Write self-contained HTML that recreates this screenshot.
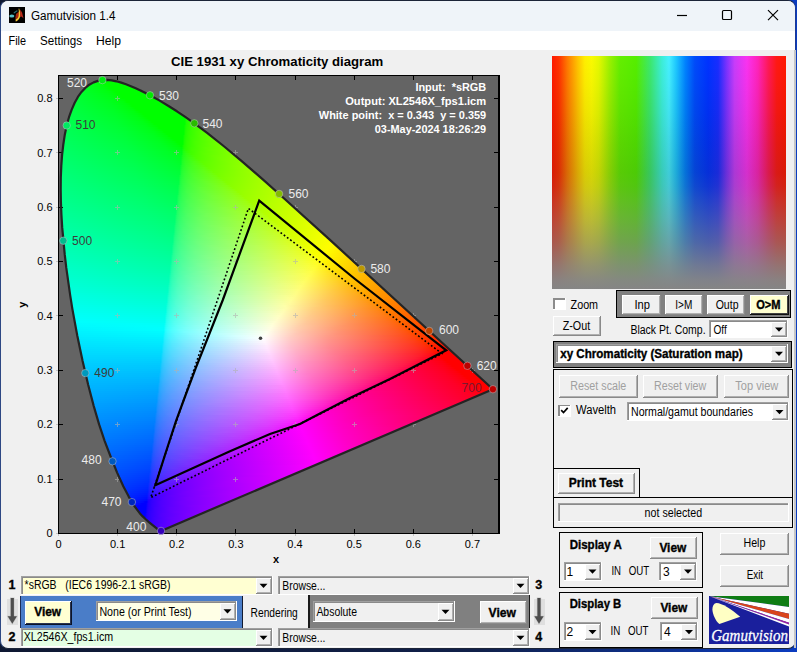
<!DOCTYPE html>
<html><head><meta charset="utf-8"><title>Gamutvision 1.4</title>
<style>
html,body{margin:0;padding:0;background:#0e1832;overflow:hidden;width:797px;height:652px}
#win{position:absolute;left:0;top:0;width:797px;height:652px;overflow:hidden;font-family:"Liberation Sans", Arial, sans-serif;background:linear-gradient(90deg,#0e1832 0,#10204a 60%,#0b3cc0 100%)}
#plotbg{position:absolute;left:58px;top:75px;width:442px;height:459px;background:#646464}
#fill{position:absolute;left:0;top:0;width:797px;height:652px;clip-path:polygon(161.0px 530.9px,159.9px 530.8px,158.2px 529.6px,149.2px 522.3px,145.4px 519.0px,142.7px 516.4px,139.7px 513.2px,134.8px 506.6px,131.9px 502.1px,128.7px 496.6px,123.3px 486.3px,117.1px 472.6px,110.0px 455.0px,104.6px 440.8px,99.1px 424.4px,93.6px 405.6px,88.1px 384.5px,82.6px 361.1px,77.3px 335.8px,72.4px 309.1px,70.2px 295.4px,66.3px 267.9px,64.7px 254.2px,62.2px 227.4px,61.4px 214.4px,60.9px 201.7px,60.7px 189.4px,60.8px 177.4px,61.3px 165.9px,62.1px 154.9px,63.3px 144.5px,64.8px 134.7px,66.7px 125.5px,69.0px 117.2px,71.7px 109.6px,74.7px 102.8px,77.9px 96.9px,81.5px 91.9px,85.3px 87.9px,89.3px 84.7px,93.6px 82.4px,97.9px 80.9px,102.4px 80.1px,107.0px 79.9px,111.7px 80.3px,116.4px 81.3px,121.2px 82.6px,126.0px 84.2px,135.7px 88.2px,140.5px 90.4px,150.0px 95.3px,159.2px 100.4px,168.1px 105.7px,176.9px 111.3px,185.6px 117.2px,194.3px 123.3px,207.1px 132.9px,224.2px 146.5px,241.1px 160.6px,262.2px 178.9px,283.3px 197.7px,329.4px 239.4px,492.9px 389.2px)}
#fill i{position:absolute;display:block;height:2px}
#sq{position:absolute;left:552px;top:56px;width:234px;height:233px}
#sq i{position:absolute;display:block;left:0;width:234px;height:233px}
svg{position:absolute;left:0;top:0}
text{font-family:"Liberation Sans", Arial, sans-serif;white-space:pre}
</style></head><body>
<div id="win">
<div style="position:absolute;left:0;top:0;width:796px;height:649px;box-sizing:border-box;border:1px solid #1b2438;border-left-color:#2e4884;border-right-color:#1c3a94;border-radius:8px;background:#f0f0f0;overflow:hidden">
<div style="height:30px;background:#eff4f9"></div><div style="height:19px;background:#fff"></div></div>
<div id="plotbg"></div>
<div id="fill"><i style="top:79px;left:103px;width:6px;background:linear-gradient(90deg,#00ff00 0,#00ff00 6px)"></i><i style="top:81px;left:93px;width:28px;background:linear-gradient(90deg,#00ff15 0,#00ff06 8px,#00ff00 11px,#00ff00 28px)"></i><i style="top:83px;left:89px;width:38px;background:linear-gradient(90deg,#00ff1c 0,#00ff08 14px,#00ff00 16px,#00ff00 38px)"></i><i style="top:85px;left:86px;width:46px;background:linear-gradient(90deg,#00ff21 0,#00ff0d 17px,#00ff00 23px,#00ff00 46px)"></i><i style="top:87px;left:84px;width:53px;background:linear-gradient(90deg,#00ff26 0,#00ff0e 21px,#00ff00 27px,#00ff00 53px)"></i><i style="top:89px;left:82px;width:59px;background:linear-gradient(90deg,#00ff29 0,#00ff12 23px,#00ff06 29px,#00ff00 31px,#00ff00 59px)"></i><i style="top:91px;left:80px;width:65px;background:linear-gradient(90deg,#00ff2d 0,#00ff10 29px,#00ff00 36px,#00ff00 65px)"></i><i style="top:93px;left:79px;width:70px;background:linear-gradient(90deg,#00ff30 0,#00ff15 29px,#00ff06 37px,#00ff00 38px,#00ff00 70px)"></i><i style="top:95px;left:77px;width:76px;background:linear-gradient(90deg,#00ff33 0,#00ff17 32px,#00ff07 41px,#00ff00 44px,#00ff00 76px)"></i><i style="top:97px;left:76px;width:80px;background:linear-gradient(90deg,#00ff35 0,#00ff19 34px,#00ff08 44px,#00ff00 46px,#00ff00 80px)"></i><i style="top:99px;left:75px;width:85px;background:linear-gradient(90deg,#00ff38 0,#00ff1b 36px,#00ff07 48px,#00ff00 51px,#00ff00 85px)"></i><i style="top:101px;left:74px;width:89px;background:linear-gradient(90deg,#00ff3a 0,#00ff1f 35px,#00ff0b 50px,#00ff00 53px,#00ff00 89px)"></i><i style="top:103px;left:73px;width:94px;background:linear-gradient(90deg,#00ff3c 0,#00ff21 37px,#00ff0c 53px,#00ff00 58px,#00ff00 94px)"></i><i style="top:105px;left:72px;width:98px;background:linear-gradient(90deg,#00ff3f 0,#00ff1e 44px,#00ff0b 57px,#00ff00 60px,#00ff00 98px)"></i><i style="top:107px;left:71px;width:102px;background:linear-gradient(90deg,#00ff41 0,#00ff23 42px,#00ff0c 60px,#00ff00 64px,#00ff00 102px)"></i><i style="top:109px;left:70px;width:106px;background:linear-gradient(90deg,#00ff43 0,#00ff25 44px,#00ff0d 63px,#00ff00 67px,#00ff00 106px)"></i><i style="top:111px;left:69px;width:110px;background:linear-gradient(90deg,#00ff45 0,#00ff28 44px,#00ff10 65px,#00ff00 71px,#00ff00 110px)"></i><i style="top:113px;left:69px;width:113px;background:linear-gradient(90deg,#00ff47 0,#00ff27 48px,#00ff0f 68px,#00ff00 74px,#00ff00 113px)"></i><i style="top:115px;left:68px;width:117px;background:linear-gradient(90deg,#00ff49 0,#00ff2a 48px,#00ff13 69px,#00ff06 75px,#00ff00 77px,#00ff00 117px)"></i><i style="top:117px;left:67px;width:121px;background:linear-gradient(90deg,#00ff4b 0,#00ff2d 48px,#00ff14 72px,#00ff04 79px,#00ff00 81px,#00ff00 118px,#12ff00 119px,#25ff00 121px)"></i><i style="top:119px;left:67px;width:124px;background:linear-gradient(90deg,#00ff4d 0,#00ff2c 52px,#00ff13 75px,#00ff06 81px,#00ff00 82px,#00ff00 118px,#16ff00 119px,#27ff00 121px,#34ff00 124px)"></i><i style="top:121px;left:66px;width:128px;background:linear-gradient(90deg,#00ff4f 0,#00ff2f 52px,#00ff17 76px,#00ff08 84px,#00ff00 86px,#00ff00 119px,#18ff00 120px,#28ff00 122px,#3eff00 128px)"></i><i style="top:123px;left:66px;width:131px;background:linear-gradient(90deg,#00ff50 0,#00ff32 51px,#00ff15 80px,#00ff06 87px,#00ff00 88px,#00ff00 119px,#1bff00 120px,#32ff00 124px,#47ff00 131px)"></i><i style="top:125px;left:65px;width:134px;background:linear-gradient(90deg,#00ff52 0,#00ff34 52px,#00ff1a 80px,#00ff07 90px,#00ff00 93px,#00ff00 119px,#1dff00 121px,#33ff00 125px,#4cff00 134px)"></i><i style="top:127px;left:65px;width:137px;background:linear-gradient(90deg,#00ff54 0,#00ff32 58px,#00ff18 84px,#00ff09 92px,#00ff00 94px,#00ff00 119px,#13ff00 120px,#26ff00 122px,#3eff00 128px,#52ff00 137px)"></i><i style="top:129px;left:64px;width:141px;background:linear-gradient(90deg,#00ff56 0,#00ff36 56px,#00ff1a 86px,#00ff07 96px,#00ff00 99px,#00ff00 120px,#16ff00 121px,#27ff00 123px,#3eff00 129px,#58ff00 141px)"></i><i style="top:131px;left:64px;width:143px;background:linear-gradient(90deg,#00ff58 0,#00ff34 62px,#00ff18 90px,#00ff09 98px,#00ff00 100px,#00ff00 120px,#19ff00 121px,#2eff00 124px,#49ff00 133px,#5cff00 143px)"></i><i style="top:133px;left:63px;width:147px;background:linear-gradient(90deg,#00ff59 0,#00ff39 59px,#00ff1d 90px,#00ff0a 101px,#00ff00 104px,#00ff00 121px,#1bff00 122px,#2fff00 125px,#4cff00 135px,#61ff00 147px)"></i><i style="top:135px;left:63px;width:149px;background:linear-gradient(90deg,#00ff5b 0,#00ff3a 60px,#00ff1f 91px,#00ff09 104px,#00ff00 106px,#00ff00 120px,#1dff00 122px,#34ff00 126px,#51ff00 137px,#64ff00 149px)"></i><i style="top:137px;left:63px;width:152px;background:linear-gradient(90deg,#00ff5d 0,#00ff3a 63px,#00ff1c 96px,#00ff07 107px,#00ff00 109px,#00ff00 120px,#13ff00 121px,#26ff00 123px,#3bff00 128px,#57ff00 140px,#69ff00 152px)"></i><i style="top:139px;left:62px;width:156px;background:linear-gradient(90deg,#00ff5e 0,#00ff3e 61px,#00ff1f 97px,#00ff0b 109px,#00ff00 112px,#00ff00 121px,#16ff00 122px,#28ff00 124px,#42ff00 131px,#5eff00 145px,#6dff00 156px)"></i><i style="top:141px;left:62px;width:158px;background:linear-gradient(90deg,#00ff60 0,#00ff3e 64px,#00ff21 98px,#00ff0a 112px,#00ff00 115px,#00ff00 121px,#19ff00 122px,#2eff00 125px,#48ff00 133px,#6aff00 153px,#71ff00 158px)"></i><i style="top:143px;left:62px;width:161px;background:linear-gradient(90deg,#00ff61 0,#00ff42 61px,#00ff23 99px,#00ff0b 114px,#00ff00 117px,#00ff00 121px,#1bff00 122px,#2fff00 125px,#48ff00 133px,#65ff00 149px,#75ff00 161px)"></i><i style="top:145px;left:62px;width:163px;background:linear-gradient(90deg,#00ff63 0,#00ff40 67px,#00ff21 103px,#00ff0a 117px,#00ff00 119px,#00ff00 120px,#1eff00 122px,#34ff00 126px,#4fff00 136px,#6fff00 156px,#78ff00 163px)"></i><i style="top:147px;left:61px;width:166px;background:linear-gradient(90deg,#00ff65 0,#00ff42 68px,#00ff23 105px,#00ff0e 119px,#00ff08 121px,#13ff04 122px,#27ff00 124px,#3fff00 130px,#5dff00 144px,#7aff00 166px)"></i><i style="top:149px;left:61px;width:169px;background:linear-gradient(90deg,#00ff66 0,#00ff46 65px,#00ff26 105px,#00ff0f 121px,#17ff0c 122px,#28ff06 124px,#2dff00 125px,#43ff00 131px,#64ff00 148px,#7eff00 169px)"></i><i style="top:151px;left:61px;width:171px;background:linear-gradient(90deg,#00ff68 0,#00ff44 71px,#00ff27 107px,#00ff14 121px,#19ff12 122px,#29ff0d 124px,#3aff00 128px,#57ff00 140px,#7aff00 165px,#81ff00 171px)"></i><i style="top:153px;left:61px;width:174px;background:linear-gradient(90deg,#00ff69 0,#00ff45 73px,#00ff24 112px,#00ff18 121px,#1cff16 122px,#30ff11 125px,#3eff06 129px,#41ff00 130px,#5dff00 143px,#85ff00 174px)"></i><i style="top:155px;left:61px;width:176px;background:linear-gradient(90deg,#00ff6b 0,#00ff46 74px,#00ff25 114px,#00ff1d 120px,#1eff1a 122px,#35ff14 126px,#4cff00 134px,#6bff00 152px,#87ff00 176px)"></i><i style="top:157px;left:60px;width:179px;background:linear-gradient(90deg,#00ff6d 0,#00ff46 78px,#00ff28 115px,#00ff21 121px,#14ff1f 122px,#27ff1d 124px,#3dff15 129px,#4dff06 135px,#4fff00 136px,#72ff00 158px,#8aff00 179px)"></i><i style="top:159px;left:60px;width:182px;background:linear-gradient(90deg,#00ff6e 0,#00ff4d 70px,#00ff2e 111px,#00ff24 121px,#17ff23 122px,#29ff20 124px,#41ff17 130px,#51ff07 137px,#55ff00 139px,#79ff00 163px,#8dff00 182px)"></i><i style="top:161px;left:60px;width:184px;background:linear-gradient(90deg,#00ff70 0,#00ff4d 73px,#00ff2e 114px,#00ff27 121px,#1aff26 122px,#2fff22 125px,#4cff15 134px,#58ff05 140px,#5cff00 142px,#81ff00 170px,#90ff00 184px)"></i><i style="top:163px;left:60px;width:186px;background:linear-gradient(90deg,#00ff71 0,#00ff4f 73px,#00ff2e 117px,#00ff2a 121px,#1cff29 122px,#30ff25 125px,#4aff1b 133px,#5cff07 142px,#60ff00 144px,#88ff00 176px,#92ff00 186px)"></i><i style="top:165px;left:60px;width:189px;background:linear-gradient(90deg,#00ff73 0,#00ff4f 76px,#00ff2e 120px,#1eff2c 122px,#35ff27 126px,#4fff1c 135px,#60ff09 144px,#63ff00 146px,#88ff00 175px,#96ff00 189px)"></i><i style="top:167px;left:60px;width:191px;background:linear-gradient(90deg,#00ff74 0,#00ff53 73px,#00ff32 118px,#00ff30 120px,#14ff2f 121px,#28ff2d 123px,#41ff27 129px,#61ff10 144px,#68ff00 149px,#90ff00 182px,#98ff00 191px)"></i><i style="top:169px;left:60px;width:193px;background:linear-gradient(90deg,#00ff76 0,#00ff54 74px,#00ff33 120px,#17ff32 121px,#29ff30 123px,#41ff2a 129px,#60ff17 143px,#6aff05 150px,#6dff00 152px,#96ff00 188px,#9bff00 193px)"></i><i style="top:171px;left:60px;width:196px;background:linear-gradient(90deg,#00ff77 0,#00ff56 74px,#00ff36 120px,#1aff35 121px,#2aff33 123px,#42ff2d 129px,#62ff19 144px,#6eff07 152px,#6fff00 153px,#9aff00 191px,#9eff00 196px)"></i><i style="top:173px;left:59px;width:199px;background:linear-gradient(90deg,#00ff79 0,#00ff57 77px,#00ff38 121px,#1dff37 122px,#31ff35 125px,#4bff2d 133px,#6cff13 151px,#73ff04 156px,#75ff00 158px,#a1ff00 199px)"></i><i style="top:175px;left:59px;width:201px;background:linear-gradient(90deg,#00ff7b 0,#00ff58 78px,#00ff3b 120px,#1fff3a 122px,#36ff36 126px,#50ff2d 135px,#6fff14 153px,#76ff07 158px,#77ff00 159px,#a3ff00 201px)"></i><i style="top:177px;left:59px;width:204px;background:linear-gradient(90deg,#00ff7c 0,#00ff5b 76px,#00ff3e 120px,#14ff3d 121px,#21ff3c 122px,#37ff39 126px,#53ff2f 136px,#72ff15 155px,#7aff04 161px,#7dff00 163px,#a6ff00 204px)"></i><i style="top:179px;left:59px;width:206px;background:linear-gradient(90deg,#00ff7e 0,#00ff59 83px,#00ff40 120px,#18ff3f 121px,#2aff3e 123px,#42ff39 129px,#61ff2a 143px,#78ff12 159px,#7dff06 163px,#7eff00 164px,#a9ff00 206px)"></i><i style="top:181px;left:59px;width:208px;background:linear-gradient(90deg,#00ff7f 0,#00ff5c 81px,#00ff43 120px,#1aff42 121px,#2bff40 123px,#46ff3a 130px,#68ff29 147px,#7eff0f 163px,#82ff00 167px,#abff00 208px)"></i><i style="top:183px;left:59px;width:210px;background:linear-gradient(90deg,#00ff81 0,#00ff5e 81px,#01ff45 120px,#1dff44 121px,#31ff42 124px,#4cff3b 132px,#6dff29 150px,#81ff10 165px,#85ff00 169px,#aeff00 210px)"></i><i style="top:185px;left:59px;width:213px;background:linear-gradient(90deg,#00ff82 0,#00ff61 79px,#00ff48 119px,#1fff47 121px,#37ff43 125px,#53ff3b 135px,#76ff24 156px,#85ff0f 168px,#89ff00 172px,#b1ff00 213px)"></i><i style="top:187px;left:59px;width:215px;background:linear-gradient(90deg,#00ff84 0,#00ff60 85px,#00ff4a 119px,#14ff4a 120px,#29ff48 122px,#42ff43 128px,#60ff38 141px,#81ff1c 164px,#8aff0a 172px,#8cff00 174px,#b3ff00 215px)"></i><i style="top:189px;left:59px;width:217px;background:linear-gradient(90deg,#00ff85 0,#00ff63 83px,#00ff4d 119px,#18ff4c 120px,#2aff4a 122px,#43ff46 128px,#62ff3a 142px,#84ff1d 166px,#8dff0c 174px,#90ff00 177px,#b6ff00 217px)"></i><i style="top:191px;left:59px;width:219px;background:linear-gradient(90deg,#00ff87 0,#00ff65 82px,#00ff4f 119px,#1bff4e 120px,#2bff4d 122px,#44ff48 128px,#68ff3a 145px,#89ff1b 170px,#91ff0a 177px,#93ff00 179px,#b8ff00 219px)"></i><i style="top:193px;left:59px;width:222px;background:linear-gradient(90deg,#00ff88 0,#00ff68 80px,#00ff52 118px,#04ff51 119px,#1dff50 120px,#32ff4e 123px,#4fff48 132px,#70ff38 150px,#8dff1a 173px,#94ff08 180px,#95ff00 181px,#bbff00 222px)"></i><i style="top:195px;left:59px;width:224px;background:linear-gradient(90deg,#00ff8a 0,#00ff67 86px,#00ff54 118px,#20ff53 120px,#37ff50 124px,#52ff49 133px,#75ff38 153px,#90ff1b 175px,#97ff0a 182px,#99ff00 184px,#beff00 224px)"></i><i style="top:197px;left:59px;width:226px;background:linear-gradient(90deg,#00ff8b 0,#00ff6b 82px,#00ff56 118px,#15ff55 119px,#22ff55 120px,#38ff52 124px,#55ff4b 134px,#78ff38 155px,#91ff1e 176px,#9aff0b 184px,#9cff00 186px,#c0ff00 226px)"></i><i style="top:199px;left:59px;width:228px;background:linear-gradient(90deg,#00ff8d 0,#00ff6b 86px,#00ff58 118px,#18ff58 119px,#2bff56 121px,#47ff52 128px,#67ff46 143px,#90ff25 174px,#9cff0d 186px,#9fff00 189px,#c3ff00 228px)"></i><i style="top:201px;left:59px;width:231px;background:linear-gradient(90deg,#00ff8e 0,#00ff6f 81px,#00ff5a 118px,#1bff5a 119px,#2cff59 121px,#48ff54 128px,#6eff45 147px,#93ff26 176px,#9fff0f 188px,#a2ff00 191px,#c6ff00 231px)"></i><i style="top:203px;left:59px;width:233px;background:linear-gradient(90deg,#00ff90 0,#00ff6f 85px,#00ff5d 117px,#05ff5d 118px,#1eff5c 119px,#33ff5a 122px,#50ff54 131px,#73ff45 150px,#95ff27 178px,#a3ff0d 191px,#a6ff00 194px,#c9ff00 233px)"></i><i style="top:205px;left:60px;width:234px;background:linear-gradient(90deg,#00ff91 0,#00ff72 82px,#00ff5f 116px,#20ff5e 118px,#34ff5c 121px,#51ff56 130px,#72ff49 148px,#98ff28 179px,#a5ff0f 192px,#a8ff00 195px,#cbff00 234px)"></i><i style="top:207px;left:60px;width:236px;background:linear-gradient(90deg,#00ff93 0,#00ff72 86px,#00ff62 116px,#15ff61 117px,#2aff60 119px,#44ff5c 125px,#62ff53 138px,#88ff3d 164px,#a0ff21 186px,#a9ff0d 195px,#acff00 198px,#ceff00 236px)"></i><i style="top:209px;left:60px;width:238px;background:linear-gradient(90deg,#00ff94 0,#00ff75 84px,#00ff64 116px,#19ff63 117px,#2bff62 119px,#45ff5e 125px,#65ff55 139px,#8dff3c 168px,#a6ff1d 191px,#aeff07 199px,#afff00 200px,#d0ff00 238px)"></i><i style="top:211px;left:60px;width:241px;background:linear-gradient(90deg,#00ff96 0,#00ff75 88px,#00ff66 116px,#1cff65 117px,#2dff64 119px,#46ff60 125px,#69ff56 141px,#96ff37 175px,#aaff1a 195px,#b0ff09 201px,#b2ff00 203px,#d4ff00 241px)"></i><i style="top:213px;left:60px;width:243px;background:linear-gradient(90deg,#00ff98 0,#00ff75 92px,#00ff69 115px,#05ff68 116px,#1eff67 117px,#33ff66 120px,#4fff61 128px,#73ff54 147px,#9fff31 183px,#afff17 199px,#b4ff06 204px,#b5ff00 205px,#d6ff00 243px)"></i><i style="top:215px;left:60px;width:245px;background:linear-gradient(90deg,#00ff99 0,#00ff79 88px,#00ff6b 115px,#20ff6a 117px,#34ff68 120px,#4dff64 127px,#71ff58 145px,#a0ff35 183px,#b2ff18 201px,#b6ff09 206px,#b8ff00 208px,#d9ff00 245px)"></i><i style="top:217px;left:60px;width:247px;background:linear-gradient(90deg,#00ff9b 0,#00ff7a 90px,#00ff6d 115px,#15ff6c 116px,#2aff6b 118px,#42ff68 123px,#64ff60 137px,#8bff4b 164px,#abff2b 193px,#b8ff0f 207px,#bbff00 210px,#dcff00 247px)"></i><i style="top:219px;left:60px;width:249px;background:linear-gradient(90deg,#00ff9d 0,#00ff7a 94px,#00ff6f 115px,#19ff6e 116px,#2cff6d 118px,#46ff6a 124px,#6aff60 140px,#94ff47 171px,#adff2c 195px,#baff13 208px,#bdff08 211px,#beff00 212px,#deff00 249px)"></i><i style="top:221px;left:60px;width:252px;background:linear-gradient(90deg,#00ff9e 0,#00ff7e 90px,#00ff71 115px,#1cff71 116px,#33ff6f 119px,#4fff6a 127px,#71ff60 144px,#a0ff41 181px,#b8ff20 205px,#bfff0b 213px,#c1ff00 215px,#e2ff00 252px)"></i><i style="top:223px;left:61px;width:253px;background:linear-gradient(90deg,#00ffa0 0,#00ff7d 95px,#00ff74 113px,#06ff73 114px,#1fff73 115px,#34ff71 118px,#50ff6d 126px,#72ff62 143px,#a4ff41 183px,#bbff21 206px,#c2ff0d 214px,#c4ff00 216px,#e5ff00 253px)"></i><i style="top:225px;left:61px;width:255px;background:linear-gradient(90deg,#00ffa1 0,#00ff81 91px,#00ff76 113px,#21ff75 115px,#3aff73 119px,#58ff6d 129px,#7dff60 150px,#adff3b 191px,#bfff1e 210px,#c6ff0b 217px,#c8ff00 219px,#e8ff00 255px)"></i><i style="top:227px;left:61px;width:257px;background:linear-gradient(90deg,#00ffa3 0,#00ff82 93px,#00ff78 113px,#16ff78 114px,#2bff77 116px,#46ff73 122px,#67ff6b 136px,#90ff58 164px,#b4ff36 198px,#c5ff19 215px,#c9ff08 220px,#caff00 221px,#eaff00 257px)"></i><i style="top:229px;left:61px;width:259px;background:linear-gradient(90deg,#00ffa5 0,#00ff84 93px,#00ff7a 113px,#19ff7a 114px,#2cff79 116px,#47ff76 122px,#68ff6e 136px,#93ff59 166px,#b7ff37 200px,#c8ff18 218px,#ceff00 224px,#edff00 259px)"></i><i style="top:231px;left:61px;width:262px;background:linear-gradient(90deg,#00ffa6 0,#00ff88 89px,#00ff7c 113px,#1cff7c 114px,#2eff7b 116px,#48ff78 122px,#6cff6f 138px,#96ff5a 168px,#bbff37 203px,#cbff19 220px,#d0ff08 225px,#d1ff00 226px,#f1ff00 262px)"></i><i style="top:233px;left:61px;width:264px;background:linear-gradient(90deg,#00ffa8 0,#00ff89 91px,#00ff7f 112px,#07ff7f 113px,#1fff7e 114px,#3aff7c 118px,#5bff76 129px,#7eff6a 149px,#b0ff48 191px,#c7ff29 215px,#d1ff12 225px,#d4ff00 229px,#f4ff00 264px)"></i><i style="top:235px;left:62px;width:265px;background:linear-gradient(90deg,#00ffa9 0,#00ff8c 88px,#00ff81 111px,#21ff80 113px,#36ff7f 116px,#52ff7b 124px,#76ff70 142px,#a5ff56 179px,#c5ff32 211px,#d4ff14 226px,#d7ff00 230px,#f7ff00 265px)"></i><i style="top:237px;left:62px;width:267px;background:linear-gradient(90deg,#00ffab 0,#00ff8b 95px,#00ff84 111px,#16ff83 112px,#24ff83 113px,#3cff81 117px,#5aff7b 127px,#7eff70 147px,#acff53 185px,#c8ff33 213px,#d6ff18 227px,#d9ff0a 231px,#dbff00 233px,#faff00 267px)"></i><i style="top:239px;left:62px;width:270px;background:linear-gradient(90deg,#00ffad 0,#00ff8c 98px,#00ff86 111px,#1aff85 112px,#2dff84 114px,#48ff81 120px,#69ff7a 134px,#93ff68 162px,#bdff47 200px,#d3ff27 223px,#dbff10 232px,#deff00 235px,#feff00 270px)"></i><i style="top:241px;left:62px;width:272px;background:linear-gradient(90deg,#00ffaf 0,#00ff8e 98px,#00ff88 111px,#1dff87 112px,#2fff87 114px,#49ff84 120px,#6cff7c 135px,#97ff69 165px,#c2ff45 205px,#d7ff26 226px,#dfff0e 235px,#e1ff02 237px,#fffd00 271px,#fffc00 272px)"></i><i style="top:243px;left:62px;width:274px;background:linear-gradient(90deg,#00ffb0 0,#00ff93 91px,#00ff8b 110px,#07ff8a 111px,#20ff8a 112px,#36ff88 115px,#52ff84 123px,#72ff7c 138px,#9eff68 170px,#c6ff45 208px,#daff27 228px,#e2ff10 237px,#e5ff00 240px,#fffd00 270px,#fff700 274px)"></i><i style="top:245px;left:62px;width:276px;background:linear-gradient(90deg,#00ffb2 0,#00ff92 99px,#00ff8d 110px,#22ff8c 112px,#3cff8a 116px,#5dff85 127px,#84ff78 149px,#b9ff57 194px,#d6ff35 223px,#e3ff19 237px,#e7ff0a 241px,#e8ff00 242px,#fffd00 268px,#fff200 276px)"></i><i style="top:247px;left:63px;width:277px;background:linear-gradient(90deg,#00ffb4 0,#00ff92 103px,#00ff8f 109px,#17ff8f 110px,#2cff8e 112px,#41ff8c 116px,#62ff86 128px,#8aff79 152px,#beff56 197px,#d9ff36 224px,#e6ff1a 238px,#ebff06 243px,#ecff00 244px,#fffd00 266px,#ffee00 277px)"></i><i style="top:249px;left:63px;width:279px;background:linear-gradient(90deg,#00ffb5 0,#00ff99 91px,#00ff91 109px,#1aff91 110px,#2eff90 112px,#49ff8d 118px,#6bff86 132px,#98ff75 162px,#c9ff50 207px,#e1ff2f 231px,#ebff16 242px,#eeff09 245px,#efff00 246px,#fffe00 264px,#ffe900 279px)"></i><i style="top:251px;left:63px;width:282px;background:linear-gradient(90deg,#00ffb7 0,#00ff9a 94px,#00ff94 109px,#1dff93 110px,#2fff92 112px,#4aff90 118px,#6cff89 132px,#9aff77 163px,#caff53 207px,#e3ff32 232px,#eeff18 244px,#f3ff00 249px,#fffc00 264px,#ffe400 282px)"></i><i style="top:253px;left:63px;width:284px;background:linear-gradient(90deg,#00ffb9 0,#00ff9b 97px,#00ff96 108px,#08ff96 109px,#20ff95 110px,#31ff95 112px,#4bff92 118px,#6cff8b 132px,#93ff7d 157px,#c5ff5c 201px,#e0ff3d 228px,#efff1f 244px,#f4ff0e 249px,#f6ff00 251px,#fffc00 262px,#ffdf00 284px)"></i><i style="top:255px;left:63px;width:286px;background:linear-gradient(90deg,#00ffbb 0,#00ff9c 100px,#00ff99 108px,#23ff98 110px,#3cff96 114px,#57ff92 122px,#7dff89 141px,#aeff72 179px,#d9ff4c 220px,#efff2a 242px,#f7ff11 251px,#faff00 254px,#fffc00 261px,#ffdb00 286px)"></i><i style="top:257px;left:64px;width:287px;background:linear-gradient(90deg,#00ffbc 0,#00ffa1 92px,#00ff9b 107px,#17ff9a 108px,#25ff9a 109px,#3eff98 113px,#5fff93 124px,#84ff89 144px,#b9ff6e 187px,#e1ff47 226px,#f4ff27 245px,#fbff13 252px,#fdff09 254px,#feff00 255px,#ffd700 287px)"></i><i style="top:259px;left:64px;width:289px;background:linear-gradient(90deg,#00ffbe 0,#00ffa1 98px,#00ff9d 107px,#1bff9d 108px,#2fff9c 110px,#4aff99 116px,#6dff93 130px,#9dff82 162px,#d3ff5c 211px,#efff38 239px,#fcff1b 252px,#fffd0c 256px,#fffa00 258px,#ffd200 289px)"></i><i style="top:261px;left:64px;width:292px;background:linear-gradient(90deg,#00ffc0 0,#00ffa4 96px,#00ffa0 107px,#1eff9f 108px,#30ff9e 110px,#4bff9c 116px,#6bff96 129px,#92ff8a 153px,#ccff67 203px,#edff43 235px,#feff23 252px,#fff80e 258px,#fff500 260px,#ffcd00 292px)"></i><i style="top:263px;left:64px;width:294px;background:linear-gradient(90deg,#00ffc2 0,#00ffa5 100px,#00ffa2 106px,#08ffa2 107px,#21ffa1 108px,#37ffa0 111px,#52ff9d 118px,#76ff96 134px,#a6ff84 168px,#dbff5e 216px,#f7ff39 244px,#fffc24 254px,#fff20b 261px,#ffef00 263px,#ffc900 294px)"></i><i style="top:265px;left:65px;width:295px;background:linear-gradient(90deg,#00ffc4 0,#00ffa6 102px,#00ffa5 105px,#23ffa4 107px,#39ffa3 110px,#56ff9f 118px,#7cff97 136px,#aeff83 173px,#deff5f 217px,#f8ff3e 243px,#fffd2f 251px,#ffee12 261px,#ffea00 264px,#ffc500 295px)"></i><i style="top:267px;left:65px;width:297px;background:linear-gradient(90deg,#00ffc6 0,#00ffa8 103px,#00ffa7 105px,#18ffa7 106px,#2effa6 108px,#47ffa4 113px,#68ff9f 125px,#93ff92 151px,#ccff73 199px,#efff51 233px,#fffe38 249px,#ffeb17 262px,#ffe70a 265px,#ffe502 266px,#ffc100 297px)"></i><i style="top:269px;left:65px;width:299px;background:linear-gradient(90deg,#00ffc8 0,#00ffaa 104px,#00ffa9 105px,#1bffa9 106px,#2fffa8 108px,#48ffa6 113px,#68ffa1 125px,#90ff97 148px,#ccff77 198px,#f5ff50 237px,#fffc3d 249px,#ffe515 265px,#ffdf00 269px,#ffbd00 299px)"></i><i style="top:271px;left:65px;width:301px;background:linear-gradient(90deg,#00ffca 0,#00ffac 105px,#1fffab 106px,#37ffaa 109px,#56ffa7 117px,#80ff9f 137px,#b2ff8b 174px,#e4ff68 219px,#fffe47 246px,#ffe21c 265px,#ffdc0a 270px,#ffdb00 271px,#ffb900 301px)"></i><i style="top:273px;left:66px;width:303px;background:linear-gradient(90deg,#00ffcb 0,#00ffb0 100px,#00ffaf 103px,#09ffae 104px,#21ffae 105px,#38ffad 108px,#50ffaa 114px,#70ffa5 127px,#9bff98 154px,#d5ff79 203px,#faff56 238px,#fffc4b 245px,#ffdf20 265px,#ffd70c 271px,#ffd500 273px,#ffb400 303px)"></i><i style="top:275px;left:66px;width:305px;background:linear-gradient(90deg,#00ffcd 0,#00ffb3 98px,#00ffb1 103px,#24ffb0 105px,#3fffaf 109px,#62ffab 120px,#8bffa1 142px,#c2ff89 185px,#efff68 226px,#fffd53 243px,#ffda21 267px,#ffd30e 273px,#ffd000 275px,#ffb000 305px)"></i><i style="top:277px;left:66px;width:307px;background:linear-gradient(90deg,#00ffcf 0,#00ffb5 100px,#00ffb4 103px,#18ffb3 104px,#2fffb2 106px,#4cffb0 112px,#6effab 125px,#9cff9f 153px,#deff7b 209px,#fffd5a 241px,#ffd622 269px,#ffcd0b 276px,#ffcb00 278px,#ffac00 307px)"></i><i style="top:279px;left:67px;width:308px;background:linear-gradient(90deg,#00ffd1 0,#00ffb7 100px,#00ffb6 102px,#1cffb6 103px,#30ffb5 105px,#4dffb3 111px,#70ffad 125px,#9bffa2 151px,#dcff81 205px,#fffd5f 239px,#ffd123 270px,#ffc90d 277px,#ffc600 279px,#ffa800 308px)"></i><i style="top:281px;left:67px;width:310px;background:linear-gradient(90deg,#00ffd3 0,#00ffb9 102px,#1fffb8 103px,#32ffb8 105px,#4effb5 111px,#71ffb0 125px,#9cffa5 151px,#dcff85 204px,#fffe66 237px,#ffcf28 270px,#ffc40f 279px,#ffc100 282px,#ffa400 310px)"></i><i style="top:283px;left:67px;width:313px;background:linear-gradient(90deg,#00ffd5 0,#00ffbb 101px,#09ffbb 102px,#22ffbb 103px,#39ffba 106px,#55ffb7 113px,#7affb1 129px,#adffa2 163px,#e9ff80 215px,#fffd6b 236px,#ffcd2d 270px,#ffc011 281px,#ffbd00 284px,#ff9f00 313px)"></i><i style="top:285px;left:67px;width:315px;background:linear-gradient(90deg,#00ffd7 0,#00ffbe 101px,#24ffbd 103px,#3bffbc 106px,#59ffba 114px,#7dffb4 130px,#afffa4 164px,#e7ff86 212px,#fffe72 234px,#ffcc34 269px,#ffbc12 283px,#ffb700 287px,#ff9b00 315px)"></i><i style="top:287px;left:68px;width:316px;background:linear-gradient(90deg,#00ffd9 0,#00ffc1 100px,#19ffc0 101px,#30ffc0 103px,#4dffbe 109px,#6effb9 121px,#99ffaf 146px,#dbff93 199px,#fffd76 232px,#ffc734 270px,#ffb714 284px,#ffb300 288px,#ff9800 316px)"></i><i style="top:289px;left:68px;width:318px;background:linear-gradient(90deg,#00ffdb 0,#00ffc3 100px,#1cffc3 101px,#31ffc2 103px,#4effc0 109px,#73ffbb 123px,#a1ffb0 151px,#e4ff91 206px,#fffe7d 230px,#ffcb41 265px,#ffb51b 284px,#ffb00a 289px,#ffae00 291px,#ff9400 318px)"></i><i style="top:291px;left:68px;width:320px;background:linear-gradient(90deg,#00ffdd 0,#00ffc6 100px,#20ffc6 101px,#33ffc5 103px,#4fffc3 109px,#6fffbf 121px,#98ffb6 144px,#d9ff9c 195px,#fffd82 229px,#ffc945 265px,#ffb019 287px,#ffab07 292px,#ffaa00 293px,#ff9000 320px)"></i><i style="top:293px;left:68px;width:322px;background:linear-gradient(90deg,#00ffe0 0,#00ffc9 99px,#0affc9 100px,#23ffc8 101px,#3affc7 104px,#53ffc5 110px,#72ffc1 122px,#9cffb8 146px,#e1ff9c 201px,#fffd86 228px,#ffcc4f 261px,#ffae1f 287px,#ffa609 294px,#ffa400 296px,#ff8c00 322px)"></i><i style="top:295px;left:69px;width:324px;background:linear-gradient(90deg,#00ffe2 0,#00ffcc 98px,#25ffcb 100px,#3cffca 103px,#5bffc8 111px,#83ffc2 129px,#b7ffb3 164px,#f7ff94 217px,#fffc8b 226px,#ffcb54 259px,#ffa920 288px,#ffa20b 295px,#ffa000 297px,#ff8800 324px)"></i><i style="top:297px;left:69px;width:326px;background:linear-gradient(90deg,#00ffe4 0,#00ffce 98px,#19ffce 99px,#28ffce 100px,#42ffcd 104px,#5effca 112px,#84ffc5 129px,#b8ffb7 164px,#fbff96 219px,#fffd91 224px,#ffca58 258px,#ffa623 289px,#ff9d09 298px,#ff9c00 299px,#ff8400 326px)"></i><i style="top:299px;left:69px;width:328px;background:linear-gradient(90deg,#00ffe6 0,#00ffd1 98px,#1dffd1 99px,#32ffd0 101px,#50ffce 107px,#75ffca 121px,#a2ffc1 147px,#efffa2 208px,#fffe97 222px,#ffcb60 255px,#ffa325 290px,#ff9a0f 299px,#ff9700 302px,#ff8000 328px)"></i><i style="top:301px;left:70px;width:329px;background:linear-gradient(90deg,#00ffe8 0,#00ffd4 97px,#20ffd4 98px,#34ffd3 100px,#51ffd1 106px,#76ffcd 120px,#a3ffc4 146px,#f4ffa4 210px,#fffd9c 220px,#ffc963 254px,#ff9e24 292px,#ff950d 301px,#ff9300 303px,#ff7c00 329px)"></i><i style="top:303px;left:70px;width:331px;background:linear-gradient(90deg,#00ffea 0,#00ffd7 96px,#0bffd7 97px,#23ffd6 98px,#35ffd6 100px,#52ffd4 106px,#77ffd0 120px,#a7ffc7 148px,#faffa6 213px,#fffb9e 220px,#ffcc6c 250px,#ff9923 295px,#ff900a 304px,#ff8e00 306px,#ff7900 331px)"></i><i style="top:305px;left:70px;width:334px;background:linear-gradient(90deg,#00ffed 0,#00ffda 96px,#26ffd9 98px,#3dffd8 101px,#59ffd7 108px,#80ffd2 124px,#b3ffc7 156px,#feffa9 215px,#ffc265 256px,#ff9727 295px,#ff8d10 305px,#ff8a00 308px,#ff7400 334px)"></i><i style="top:307px;left:71px;width:335px;background:linear-gradient(90deg,#00ffef 0,#00ffdd 95px,#1affdc 96px,#31ffdc 98px,#4cffdb 103px,#70ffd7 115px,#9dffd0 139px,#e9ffb8 196px,#fffdab 215px,#ffce79 244px,#ff962f 292px,#ff8911 306px,#ff8500 310px,#ff7000 335px)"></i><i style="top:309px;left:71px;width:337px;background:linear-gradient(90deg,#00fff1 0,#00ffe0 95px,#1effdf 96px,#33ffdf 98px,#49ffde 102px,#6cffdb 113px,#94ffd5 133px,#d0ffc6 175px,#fffeb1 213px,#ffd080 241px,#ff9c40 284px,#ff8718 306px,#ff8207 311px,#ff8100 312px,#ff6c00 337px)"></i><i style="top:311px;left:71px;width:339px;background:linear-gradient(90deg,#00fff3 0,#00ffe3 95px,#21ffe2 96px,#35ffe2 98px,#52ffe0 104px,#74ffdd 116px,#a2ffd6 141px,#f0ffbe 199px,#fffdb6 212px,#ffcc81 242px,#ff9840 286px,#ff8319 308px,#ff7e09 313px,#ff7d00 315px,#ff6800 339px)"></i><i style="top:313px;left:72px;width:340px;background:linear-gradient(90deg,#00fff6 0,#00ffe6 93px,#0bffe6 94px,#24ffe5 95px,#36ffe5 97px,#50ffe4 102px,#75ffe1 115px,#a3ffda 140px,#efffc4 196px,#fffebc 209px,#ffcb85 240px,#ff9947 282px,#ff801c 308px,#ff7a0b 314px,#ff7900 316px,#ff6400 340px)"></i><i style="top:315px;left:72px;width:342px;background:linear-gradient(90deg,#00fff8 0,#00ffe9 93px,#27ffe8 95px,#3effe8 98px,#58ffe6 104px,#7affe3 117px,#a9ffdc 143px,#ffffc2 207px,#ffcb8b 238px,#ff994d 280px,#ff7d1f 309px,#ff7509 317px,#ff7400 319px,#ff6100 342px)"></i><i style="top:317px;left:73px;width:344px;background:linear-gradient(90deg,#00fffa 0,#00ffec 92px,#1affec 93px,#29ffeb 94px,#40ffeb 97px,#5cffe9 104px,#84ffe6 120px,#bcffdc 154px,#fffec7 205px,#ffcd92 234px,#ff9752 278px,#ff781f 310px,#ff710b 318px,#ff7000 320px,#ff5c00 344px)"></i><i style="top:319px;left:73px;width:346px;background:linear-gradient(90deg,#00fffd 0,#00ffef 92px,#1effef 93px,#2cffef 94px,#46ffee 98px,#63ffec 106px,#89ffe8 122px,#c4ffde 159px,#fffdcb 204px,#ffc993 235px,#ff9554 278px,#ff7522 311px,#ff6d0c 320px,#ff6c01 322px,#ff5800 346px)"></i><i style="top:321px;left:73px;width:348px;background:linear-gradient(90deg,#00ffff 0,#00fff2 92px,#22fff2 93px,#36fff2 95px,#54fff0 101px,#79ffee 114px,#abffe7 141px,#fffed1 202px,#ffc897 234px,#ff955a 276px,#ff6f1f 315px,#ff680a 323px,#ff6700 325px,#ff5400 348px)"></i><i style="top:323px;left:74px;width:349px;background:linear-gradient(90deg,#00fcff 0,#00fffa 66px,#00fff6 90px,#0cfff5 91px,#25fff5 92px,#38fff5 94px,#55fff4 100px,#78fff1 112px,#a9ffeb 138px,#ffffd7 199px,#ffc89c 231px,#ff915b 276px,#ff6d23 314px,#ff640c 324px,#ff6300 326px,#ff5000 349px)"></i><i style="top:325px;left:74px;width:351px;background:linear-gradient(90deg,#00faff 0,#00fffc 73px,#00fff9 90px,#28fff8 92px,#40fff8 95px,#61fff7 103px,#8cfff3 121px,#c7ffea 157px,#ffffdc 198px,#ffcda7 226px,#ff9667 269px,#ff6b27 314px,#ff600d 326px,#ff5e00 329px,#ff4b00 351px)"></i><i style="top:327px;left:74px;width:354px;background:linear-gradient(90deg,#00f7ff 0,#00fffd 87px,#00fffc 90px,#1bfffc 91px,#34fffc 93px,#54fffb 99px,#7afff8 112px,#adfff3 139px,#fffee1 197px,#ffcfae 223px,#ff9d74 261px,#ff6526 317px,#ff5c0f 328px,#ff5900 331px,#ff4600 354px)"></i><i style="top:329px;left:75px;width:355px;background:linear-gradient(90deg,#00f5ff 0,#00ffff 89px,#1fffff 90px,#35ffff 92px,#4cfffe 96px,#69fffd 104px,#96fffa 124px,#d8fff0 166px,#fffde5 195px,#ffccb0 222px,#ff9772 263px,#ff6025 319px,#ff570d 330px,#ff5400 333px,#ff4200 355px)"></i><i style="top:331px;left:75px;width:357px;background:linear-gradient(90deg,#00f2ff 0,#00fbff 89px,#22fbff 90px,#37fcff 92px,#51fcff 97px,#77feff 109px,#a7fffc 133px,#feffed 192px,#ffc5ad 225px,#ff9171 266px,#ff5d27 320px,#ff530e 332px,#ff5000 335px,#ff3d00 357px)"></i><i style="top:333px;left:75px;width:359px;background:linear-gradient(90deg,#00f0ff 0,#00f8ff 88px,#0cf8ff 89px,#25f8ff 90px,#3ff8ff 93px,#5df9ff 100px,#85fbff 115px,#bcfffd 145px,#fffff2 191px,#ffc8b6 221px,#ff9378 262px,#ff5826 323px,#ff4d0c 335px,#ff4b00 338px,#ff3800 359px)"></i><i style="top:335px;left:76px;width:360px;background:linear-gradient(90deg,#00eeff 0,#00f5ff 87px,#28f5ff 89px,#3ff5ff 92px,#61f6ff 100px,#8df8ff 118px,#d4ffff 159px,#fffef7 189px,#ffccbf 216px,#ff9b87 252px,#ff623f 307px,#ff4c18 332px,#ff4706 338px,#ff4600 339px,#ff3300 360px)"></i><i style="top:337px;left:76px;width:363px;background:linear-gradient(90deg,#00ebff 0,#00f1ff 87px,#1bf1ff 88px,#2af2ff 89px,#46f2ff 93px,#67f3ff 102px,#93f5ff 121px,#eefeff 176px,#fffdfc 188px,#ffccc5 214px,#ff9889 252px,#ff512c 323px,#ff440f 338px,#ff4000 342px,#ff2d00 363px)"></i><i style="top:339px;left:77px;width:364px;background:linear-gradient(90deg,#00e9ff 0,#00eeff 86px,#1feeff 87px,#34eeff 89px,#4fefff 94px,#72f0ff 105px,#aaf3ff 133px,#fffafe 187px,#ffc8c5 214px,#ff948a 252px,#ff5032 320px,#ff4013 338px,#ff3c00 343px,#ff2700 364px)"></i><i style="top:341px;left:77px;width:366px;background:linear-gradient(90deg,#00e6ff 0,#00ebff 86px,#22ebff 87px,#36ebff 89px,#54ecff 95px,#79edff 108px,#adefff 135px,#fff5fd 188px,#ffc5c7 214px,#ff938d 251px,#ff5a47 306px,#ff3f1c 336px,#ff3708 344px,#ff3600 346px,#ff2100 366px)"></i><i style="top:343px;left:78px;width:367px;background:linear-gradient(90deg,#00e4ff 0,#00e8ff 84px,#0ce8ff 85px,#24e8ff 86px,#37e8ff 88px,#54e8ff 94px,#79e9ff 107px,#aeebff 135px,#fff0fd 188px,#ffc2c9 213px,#ff8f8e 251px,#ff412a 329px,#ff330d 344px,#ff3000 347px,#ff1a00 367px)"></i><i style="top:345px;left:78px;width:369px;background:linear-gradient(90deg,#00e2ff 0,#00e5ff 84px,#27e5ff 86px,#3ee5ff 89px,#58e5ff 95px,#7de6ff 109px,#afe8ff 136px,#ffeafd 189px,#ffbfcb 213px,#ff8c90 251px,#ff3a27 333px,#ff2e0e 346px,#ff2c08 348px,#ff2a01 349px,#ff1100 369px)"></i><i style="top:347px;left:78px;width:371px;background:linear-gradient(90deg,#00dfff 0,#00e2ff 84px,#1ae2ff 85px,#29e2ff 86px,#44e2ff 90px,#65e2ff 99px,#93e3ff 120px,#e1e6ff 169px,#ffe7ff 189px,#ffbccd 213px,#ff8992 251px,#ff3325 337px,#ff260d 349px,#ff2300 352px,#ff0900 369px,#ff0000 371px)"></i><i style="top:349px;left:79px;width:373px;background:linear-gradient(90deg,#00ddff 0,#00dfff 83px,#1edfff 84px,#33dfff 86px,#4edfff 91px,#72dfff 103px,#a6e0ff 130px,#ffe2fe 189px,#ffb2c6 217px,#ff808c 256px,#ff2c24 339px,#ff1f0b 351px,#ff1c00 353px,#ff0900 364px,#ff0000 366px,#ff0000 373px)"></i><i style="top:351px;left:79px;width:375px;background:linear-gradient(90deg,#00dbff 0,#00dcff 83px,#21dcff 84px,#35dcff 86px,#52dcff 92px,#74dcff 104px,#a4dcff 129px,#ffddfe 190px,#ffafc8 217px,#ff7d8e 256px,#ff2726 340px,#ff170c 353px,#ff1200 356px,#ff0600 361px,#ff0000 362px,#ff0000 375px)"></i><i style="top:353px;left:80px;width:376px;background:linear-gradient(90deg,#00d9ff 0,#00d9ff 81px,#0cd9ff 82px,#24d9ff 83px,#3cd9ff 86px,#56d9ff 92px,#7dd9ff 107px,#b5d9ff 139px,#ffd7fe 190px,#ffacca 216px,#ff7a90 255px,#ff2026 341px,#ff0c0e 354px,#ff0100 357px,#ff0000 376px)"></i><i style="top:355px;left:80px;width:378px;background:linear-gradient(90deg,#00d6ff 0,#00d6ff 81px,#26d6ff 83px,#3dd6ff 86px,#5dd6ff 94px,#87d5ff 112px,#c6d5ff 151px,#ffd2fd 191px,#ffa3c5 220px,#ff6d86 264px,#ff202e 338px,#ff0a19 351px,#ff0013 354px,#ff0004 359px,#ff0000 361px,#ff0000 378px)"></i><i style="top:357px;left:80px;width:380px;background:linear-gradient(90deg,#00d4ff 0,#00d3ff 81px,#1ad3ff 82px,#31d3ff 84px,#4cd3ff 89px,#6dd2ff 100px,#99d2ff 122px,#ffcfff 191px,#ffa0c7 220px,#ff6e8c 261px,#ff1f34 335px,#ff0722 348px,#ff001f 350px,#ff000a 360px,#ff0000 362px,#ff0000 380px)"></i><i style="top:359px;left:81px;width:382px;background:linear-gradient(90deg,#00d2ff 0,#00d0ff 80px,#1ed0ff 81px,#32d0ff 83px,#48d0ff 87px,#6bcfff 98px,#97ceff 120px,#ffcaff 191px,#ff9cc7 220px,#ff688a 263px,#ff1f3c 330px,#ff0a2d 342px,#ff0029 345px,#ff000c 361px,#ff0000 364px,#ff0000 382px)"></i><i style="top:361px;left:81px;width:384px;background:linear-gradient(90deg,#00d0ff 0,#00cdff 80px,#21cdff 81px,#34cdff 83px,#51cdff 89px,#76ccff 103px,#a5cbff 129px,#ffc5fe 192px,#ff94c4 223px,#ff6087 267px,#ff1e42 327px,#ff0734 339px,#ff0030 342px,#ff0012 361px,#ff0006 365px,#ff0000 366px,#ff0000 384px)"></i><i style="top:363px;left:82px;width:385px;background:linear-gradient(90deg,#00cdff 0,#00caff 78px,#0ccaff 79px,#23caff 80px,#3bcaff 83px,#5bc9ff 91px,#80c9ff 107px,#b5c6ff 139px,#ffc0fe 192px,#ff91c6 222px,#ff5d89 266px,#ff1d48 323px,#ff073b 334px,#ff0038 337px,#ff0013 362px,#ff0000 368px,#ff0000 385px)"></i><i style="top:365px;left:82px;width:387px;background:linear-gradient(90deg,#00cbff 0,#00c7ff 78px,#25c7ff 80px,#3cc7ff 83px,#5bc6ff 91px,#80c5ff 107px,#b6c2ff 140px,#ffbbfe 193px,#ff8dc6 223px,#ff5787 269px,#ff1c4d 320px,#ff0842 330px,#ff0040 332px,#ff001b 360px,#ff0009 368px,#ff0000 370px,#ff0000 387px)"></i><i style="top:367px;left:83px;width:388px;background:linear-gradient(90deg,#00c9ff 0,#00c5ff 77px,#19c4ff 78px,#30c4ff 80px,#46c4ff 84px,#69c3ff 95px,#99c1ff 120px,#ffb6fd 193px,#ff86c3 225px,#ff4e83 273px,#ff1c54 315px,#ff0849 325px,#ff0047 327px,#ff001c 361px,#ff0007 370px,#ff0000 372px,#ff0000 388px)"></i><i style="top:369px;left:83px;width:390px;background:linear-gradient(90deg,#00c7ff 0,#00c2ff 77px,#1dc2ff 78px,#32c1ff 80px,#4fc1ff 86px,#74c0ff 100px,#a5bdff 128px,#ffb1fd 194px,#ff83c5 225px,#ff508b 268px,#ff1b59 312px,#ff0850 321px,#ff004e 323px,#ff001e 362px,#ff0009 372px,#ff0000 374px,#ff0000 390px)"></i><i style="top:371px;left:84px;width:392px;background:linear-gradient(90deg,#00c4ff 0,#00bfff 76px,#20bfff 77px,#33bfff 79px,#4fbeff 85px,#70bdff 97px,#9dbaff 122px,#ffadff 193px,#ff81c8 223px,#ff4a8a 269px,#ff1b60 307px,#ff0856 316px,#ff0054 318px,#ff0023 360px,#ff000d 372px,#ff0000 376px,#ff0000 392px)"></i><i style="top:373px;left:84px;width:394px;background:linear-gradient(90deg,#00c2ff 0,#00bcff 75px,#0cbcff 76px,#23bcff 77px,#3abcff 80px,#56bbff 87px,#78baff 101px,#a7b6ff 129px,#ffa8ff 194px,#ff7dca 223px,#ff4b91 265px,#ff1d67 302px,#ff095c 312px,#ff005a 314px,#ff0025 361px,#ff000c 375px,#ff0000 378px,#ff0000 394px)"></i><i style="top:375px;left:85px;width:395px;background:linear-gradient(90deg,#00c0ff 0,#00baff 74px,#25b9ff 76px,#40b9ff 80px,#62b8ff 90px,#8eb5ff 112px,#d5acff 162px,#ffa3fe 194px,#ff74c4 227px,#ff3d88 273px,#ff1568 302px,#ff0562 308px,#ff005f 310px,#ff0024 363px,#ff000d 376px,#ff0007 378px,#ff0000 379px,#ff0000 395px)"></i><i style="top:377px;left:85px;width:397px;background:linear-gradient(90deg,#00beff 0,#00b7ff 74px,#19b7ff 75px,#27b7ff 76px,#41b6ff 80px,#62b5ff 90px,#8eb2ff 112px,#dba7ff 167px,#ff9efe 195px,#ff6fc4 228px,#ff3485 277px,#ff116c 300px,#ff0067 305px,#ff0023 366px,#ff000b 379px,#ff0000 382px,#ff0000 397px)"></i><i style="top:379px;left:86px;width:398px;background:linear-gradient(90deg,#00bbff 0,#00b4ff 73px,#1db4ff 74px,#31b4ff 76px,#4ab3ff 81px,#6eb1ff 94px,#9fadff 122px,#ff99fe 195px,#ff6ec9 225px,#ff388f 269px,#ff1574 293px,#ff066e 299px,#ff006d 300px,#ff0025 366px,#ff000a 381px,#ff0000 383px,#ff0000 398px)"></i><i style="top:381px;left:86px;width:401px;background:linear-gradient(90deg,#00b9ff 0,#00b2ff 73px,#20b1ff 74px,#38b1ff 77px,#54b0ff 84px,#76aeff 98px,#a7a8ff 128px,#ff95ff 195px,#ff67c6 228px,#ff2d8b 274px,#ff1278 291px,#ff0674 295px,#ff0073 296px,#ff0028 366px,#ff000e 382px,#ff0000 386px,#ff0000 401px)"></i><i style="top:383px;left:86px;width:403px;background:linear-gradient(90deg,#00b7ff 0,#00afff 72px,#0cafff 73px,#22afff 74px,#39aeff 77px,#58adff 85px,#7eaaff 102px,#bba2ff 143px,#ff90ff 196px,#ff62c6 229px,#ff2288 278px,#ff0a7b 290px,#ff0079 292px,#ff0027 369px,#ff000f 384px,#ff0000 388px,#ff0000 403px)"></i><i style="top:385px;left:87px;width:404px;background:linear-gradient(90deg,#00b5ff 0,#00acff 71px,#24acff 73px,#3fabff 77px,#5baaff 85px,#85a7ff 105px,#c59cff 150px,#ff89fd 197px,#ff5ec8 228px,#ff1f8c 275px,#ff0780 286px,#ff007f 287px,#ff0025 372px,#ff000b 387px,#ff0000 390px,#ff0000 404px)"></i><i style="top:387px;left:88px;width:405px;background:linear-gradient(90deg,#00b3ff 0,#00aaff 70px,#19aaff 71px,#2fa9ff 73px,#4ca8ff 79px,#6ea6ff 92px,#9ca0ff 119px,#f58aff 188px,#ff84fc 197px,#ff52c1 233px,#ff1e91 271px,#ff0b87 280px,#ff0085 282px,#ff0024 374px,#ff000c 388px,#ff0000 391px,#ff0000 405px)"></i><i style="top:389px;left:88px;width:405px;background:linear-gradient(90deg,#00b1ff 0,#00a7ff 70px,#1ca7ff 71px,#30a7ff 73px,#48a6ff 78px,#65a4ff 88px,#8ba0ff 108px,#cb93ff 155px,#ff80fe 197px,#ff51c5 231px,#ff1d96 268px,#ff078c 277px,#ff008b 278px,#ff0027 374px,#ff000d 390px,#ff0000 394px,#ff0000 405px)"></i><i style="top:391px;left:89px;width:399px;background:linear-gradient(90deg,#00aeff 0,#00a4ff 69px,#1fa4ff 70px,#31a4ff 72px,#4ca3ff 78px,#6ca0ff 90px,#9a9aff 117px,#e985ff 179px,#ff7bfe 197px,#ff4fca 228px,#ff1d9c 263px,#ff0b93 271px,#ff0191 273px,#ff0025 377px,#ff000c 392px,#ff0000 395px,#ff0000 399px)"></i><i style="top:393px;left:89px;width:394px;background:linear-gradient(90deg,#00acff 0,#00a2ff 68px,#0ca2ff 69px,#22a2ff 70px,#3da1ff 74px,#5c9fff 83px,#869aff 104px,#c98cff 153px,#ff75fd 198px,#ff43c3 234px,#ff189f 262px,#ff0898 268px,#ff0096 270px,#ff0024 380px,#ff000d 394px)"></i><i style="top:395px;left:90px;width:389px;background:linear-gradient(90deg,#00aaff 0,#009fff 67px,#249fff 69px,#3e9eff 73px,#5c9cff 82px,#8698ff 103px,#c888ff 152px,#ff71ff 197px,#ff41c7 231px,#ff18a6 257px,#ff089e 263px,#ff009c 265px,#ff0023 382px,#ff0019 389px)"></i><i style="top:397px;left:90px;width:384px;background:linear-gradient(90deg,#00a8ff 0,#009dff 67px,#189dff 68px,#269dff 69px,#3f9cff 73px,#5f9aff 83px,#8994ff 105px,#cb83ff 155px,#ff6cff 198px,#ff3dc9 231px,#ff17ab 254px,#ff00a2 261px,#ff0050 341px,#ff0023 384px)"></i><i style="top:399px;left:91px;width:378px;background:linear-gradient(90deg,#00a6ff 0,#009aff 66px,#1c9aff 67px,#369aff 70px,#5198ff 77px,#7694ff 93px,#a98aff 127px,#ed71ff 183px,#ff65fd 199px,#ff36c9 231px,#ff15b0 250px,#ff00a9 256px,#ff0064 321px,#ff002c 378px)"></i><i style="top:401px;left:91px;width:374px;background:linear-gradient(90deg,#00a4ff 0,#0098ff 66px,#1f98ff 67px,#3197ff 69px,#4f96ff 76px,#7492ff 92px,#aa87ff 128px,#f16aff 187px,#ff60fe 199px,#ff2dc8 233px,#ff10b4 248px,#ff00af 252px,#ff006b 316px,#ff0033 374px)"></i><i style="top:403px;left:92px;width:368px;background:linear-gradient(90deg,#00a1ff 0,#0095ff 64px,#0c95ff 65px,#2195ff 66px,#3295ff 68px,#4c93ff 74px,#6e90ff 88px,#9a88ff 115px,#e66bff 177px,#ff5afe 199px,#ff26c8 233px,#ff0db9 244px,#ff00b6 247px,#ff0077 304px,#ff003a 368px)"></i><i style="top:405px;left:92px;width:363px;background:linear-gradient(90deg,#009fff 0,#0093ff 64px,#2392ff 66px,#3892ff 69px,#5590ff 77px,#7d8bff 96px,#b37dff 135px,#f160ff 187px,#ff54fe 200px,#ff21cb 232px,#ff0abf 241px,#ff00bc 243px,#ff007d 300px,#ff0041 363px)"></i><i style="top:407px;left:93px;width:357px;background:linear-gradient(90deg,#009dff 0,#0090ff 63px,#1890ff 64px,#2d90ff 66px,#468eff 71px,#668bff 83px,#8e84ff 106px,#d66aff 164px,#ff4fff 199px,#ff1dcf 229px,#ff0ac6 236px,#ff00c3 238px,#ff0085 292px,#ff0048 357px)"></i><i style="top:409px;left:93px;width:353px;background:linear-gradient(90deg,#009bff 0,#008eff 63px,#1c8eff 64px,#2f8dff 66px,#4a8cff 72px,#6a88ff 85px,#9280ff 109px,#d865ff 166px,#ff49ff 200px,#ff19d4 227px,#ff06cb 233px,#ff00ca 234px,#ff008f 284px,#ff004e 353px)"></i><i style="top:411px;left:94px;width:347px;background:linear-gradient(90deg,#0099ff 0,#008bff 62px,#1e8bff 63px,#308bff 65px,#4a89ff 71px,#6886ff 83px,#8f7eff 106px,#d761ff 165px,#fd45ff 198px,#ff3bf8 204px,#ff17d9 223px,#ff06d2 228px,#ff00d1 229px,#ff0099 275px,#ff0054 347px)"></i><i style="top:413px;left:95px;width:341px;background:linear-gradient(90deg,#0096ff 0,#0089ff 60px,#0c89ff 61px,#2189ff 62px,#3788ff 65px,#5486ff 73px,#7681ff 89px,#a973ff 125px,#e156ff 173px,#ff3bfe 200px,#ff15df 219px,#ff06d9 223px,#ff00d8 224px,#ff009f 270px,#ff005a 341px)"></i><i style="top:415px;left:95px;width:337px;background:linear-gradient(90deg,#0094ff 0,#0087ff 60px,#2386ff 62px,#3c85ff 66px,#5c82ff 76px,#867aff 99px,#c761ff 151px,#f045ff 187px,#ff33fe 201px,#ff12e5 216px,#ff07e1 219px,#ff00df 220px,#ff00a6 265px,#ff0060 337px)"></i><i style="top:417px;left:96px;width:331px;background:linear-gradient(90deg,#0092ff 0,#0084ff 59px,#1884ff 60px,#2d83ff 62px,#4881ff 68px,#6b7dff 82px,#9872ff 111px,#d356ff 161px,#f737ff 193px,#ff28fc 202px,#ff0cea 213px,#ff00e7 215px,#ff00b3 254px,#ff0071 318px,#ff0066 331px)"></i><i style="top:419px;left:96px;width:326px;background:linear-gradient(90deg,#0090ff 0,#0082ff 59px,#1b81ff 60px,#2e81ff 62px,#497fff 68px,#6b7aff 82px,#986fff 111px,#d053ff 159px,#f136ff 189px,#ff20fd 202px,#ff08f0 210px,#ff00ef 211px,#ff00ba 249px,#ff0078 312px,#ff006c 326px)"></i><i style="top:421px;left:97px;width:321px;background:linear-gradient(90deg,#008eff 0,#007fff 58px,#1e7fff 59px,#357eff 62px,#527bff 70px,#7675ff 87px,#aa64ff 125px,#d848ff 166px,#f42bff 191px,#ff14fd 202px,#ff08f8 205px,#ff00f6 206px,#ff00bd 247px,#ff0081 303px,#ff0071 321px)"></i><i style="top:423px;left:98px;width:315px;background:linear-gradient(90deg,#008bff 0,#007dff 56px,#0c7dff 57px,#207cff 58px,#3b7bff 62px,#5878ff 71px,#7e71ff 91px,#b45cff 133px,#dd3fff 170px,#f520ff 192px,#fd0dff 199px,#ff00ff 201px,#ff00c8 238px,#ff008d 291px,#ff0077 315px)"></i><i style="top:425px;left:98px;width:310px;background:linear-gradient(90deg,#0089ff 0,#007aff 56px,#227aff 58px,#3779ff 61px,#5376ff 69px,#7b6fff 89px,#af5bff 129px,#db3bff 169px,#f11dff 189px,#f909ff 196px,#fa00ff 197px,#ff00fb 204px,#ff00c6 241px,#ff008b 295px,#ff007d 310px)"></i><i style="top:427px;left:99px;width:305px;background:linear-gradient(90deg,#0087ff 0,#0078ff 55px,#1878ff 56px,#2c77ff 58px,#4775ff 64px,#6571ff 76px,#8c66ff 100px,#c24bff 145px,#e12eff 174px,#f013ff 188px,#f409ff 191px,#f500ff 192px,#ff00fc 203px,#ff00c1 245px,#ff0084 303px,#ff0082 305px)"></i><i style="top:429px;left:100px;width:299px;background:linear-gradient(90deg,#0085ff 0,#0075ff 54px,#1b75ff 55px,#2d74ff 57px,#4872ff 63px,#696dff 77px,#9062ff 102px,#c445ff 146px,#e029ff 172px,#eb13ff 183px,#ee09ff 186px,#f001ff 187px,#ff00fe 202px,#ff00ca 238px,#ff0091 290px,#ff0088 299px)"></i><i style="top:431px;left:100px;width:294px;background:linear-gradient(90deg,#0083ff 0,#0073ff 54px,#1e73ff 55px,#3472ff 58px,#516fff 66px,#7966ff 86px,#ad51ff 126px,#d233ff 160px,#e516ff 178px,#e909ff 182px,#ec00ff 184px,#ff00fe 203px,#ff00ca 239px,#ff008e 294px)"></i><i style="top:433px;left:101px;width:289px;background:linear-gradient(90deg,#0080ff 0,#0071ff 52px,#0c70ff 53px,#2070ff 54px,#356fff 57px,#516cff 65px,#7166ff 80px,#a153ff 115px,#c937ff 151px,#de1aff 171px,#e409ff 177px,#e700ff 179px,#ff00fd 203px,#ff00c4 244px,#ff0094 289px)"></i><i style="top:435px;left:102px;width:283px;background:linear-gradient(90deg,#007eff 0,#006eff 51px,#226eff 53px,#3b6cff 57px,#5968ff 67px,#7f5fff 88px,#b543ff 132px,#d226ff 159px,#de10ff 170px,#e200ff 174px,#ff00fd 203px,#ff00c8 241px,#ff009a 283px)"></i><i style="top:437px;left:102px;width:278px;background:linear-gradient(90deg,#007cff 0,#006cff 51px,#176bff 52px,#2c6bff 54px,#4668ff 60px,#6862ff 74px,#9353ff 103px,#bc38ff 139px,#d21fff 159px,#da0dff 167px,#dd00ff 170px,#ff00fd 204px,#ff00c8 242px,#ff00a0 278px)"></i><i style="top:439px;left:103px;width:272px;background:linear-gradient(90deg,#0079ff 0,#0069ff 50px,#1b69ff 51px,#3368ff 54px,#4f64ff 62px,#715dff 78px,#9f4aff 112px,#c32cff 145px,#d313ff 160px,#d800ff 165px,#ff00fd 204px,#ff00c8 242px,#ff00a7 272px)"></i><i style="top:441px;left:104px;width:267px;background:linear-gradient(90deg,#0077ff 0,#0067ff 49px,#1d66ff 50px,#3465ff 53px,#5062ff 61px,#7459ff 79px,#a741ff 118px,#c622ff 147px,#d00dff 157px,#d300ff 160px,#ff00fe 203px,#ff00c7 243px,#ff00ac 267px)"></i><i style="top:443px;left:104px;width:262px;background:linear-gradient(90deg,#0075ff 0,#0065ff 48px,#0c64ff 49px,#1f64ff 50px,#3463ff 53px,#505fff 61px,#7456ff 79px,#a33fff 115px,#c320ff 144px,#cc0dff 153px,#cf00ff 156px,#ff00fe 204px,#ff00c7 244px,#ff00b3 262px)"></i><i style="top:445px;left:105px;width:256px;background:linear-gradient(90deg,#0072ff 0,#0062ff 47px,#2161ff 49px,#3560ff 52px,#505cff 60px,#7453ff 78px,#a539ff 116px,#bd21ff 138px,#c70dff 148px,#ca00ff 151px,#ff00fd 204px,#ff00c5 246px,#ff00ba 256px)"></i><i style="top:447px;left:106px;width:251px;background:linear-gradient(90deg,#0070ff 0,#005fff 46px,#175fff 47px,#2b5eff 49px,#455cff 55px,#6256ff 67px,#8848ff 91px,#b229ff 127px,#c210ff 142px,#c600ff 146px,#ff00fd 204px,#ff00c5 246px,#ff00bf 251px)"></i><i style="top:449px;left:107px;width:245px;background:linear-gradient(90deg,#006eff 0,#005dff 45px,#1a5cff 46px,#2c5cff 48px,#4659ff 54px,#6452ff 67px,#913fff 97px,#b026ff 124px,#be0dff 138px,#c100ff 141px,#ff00fd 204px,#ff00c6 245px)"></i><i style="top:451px;left:107px;width:240px;background:linear-gradient(90deg,#006bff 0,#005aff 45px,#1d5aff 46px,#2d59ff 48px,#4357ff 53px,#654fff 67px,#923bff 98px,#b11dff 126px,#bb0aff 135px,#bd00ff 137px,#ff00fd 205px,#ff00cd 240px)"></i><i style="top:453px;left:108px;width:235px;background:linear-gradient(90deg,#0069ff 0,#0058ff 43px,#0c58ff 44px,#1f57ff 45px,#3456ff 48px,#4f52ff 56px,#7148ff 73px,#a12bff 110px,#b410ff 128px,#b800ff 132px,#ff00fd 205px,#ff00d4 235px)"></i><i style="top:455px;left:109px;width:229px;background:linear-gradient(90deg,#0066ff 0,#0055ff 42px,#2155ff 44px,#3953ff 48px,#574dff 58px,#7e3fff 81px,#a521ff 113px,#b20aff 125px,#b400ff 127px,#ff00fe 204px,#ff00db 229px)"></i><i style="top:457px;left:110px;width:223px;background:linear-gradient(90deg,#0064ff 0,#0053ff 41px,#1752ff 42px,#2b51ff 44px,#444eff 50px,#6148ff 62px,#8b34ff 90px,#a619ff 113px,#ae06ff 121px,#af00ff 122px,#ff00fe 204px,#ff00e3 223px)"></i><i style="top:459px;left:111px;width:218px;background:linear-gradient(90deg,#0061ff 0,#0050ff 40px,#1a50ff 41px,#2c4fff 43px,#484bff 50px,#6e40ff 68px,#9a22ff 102px,#a80dff 114px,#ab00ff 117px,#ff00fd 204px,#ff00e9 218px)"></i><i style="top:461px;left:111px;width:213px;background:linear-gradient(90deg,#005fff 0,#004dff 40px,#1d4dff 41px,#324bff 44px,#4e47ff 52px,#713bff 70px,#981fff 100px,#a40aff 111px,#a600ff 113px,#ff00fd 205px,#ff00f2 213px)"></i><i style="top:463px;left:112px;width:207px;background:linear-gradient(90deg,#005cff 0,#004bff 38px,#0c4bff 39px,#1f4aff 40px,#3848ff 44px,#5542ff 54px,#7a33ff 75px,#9819ff 99px,#a107ff 107px,#a200ff 108px,#ff00fd 205px,#ff00fa 207px)"></i><i style="top:465px;left:113px;width:202px;background:linear-gradient(90deg,#005aff 0,#0048ff 37px,#2147ff 39px,#3845ff 43px,#563fff 53px,#7b2eff 75px,#9515ff 96px,#9c07ff 102px,#9d00ff 103px,#fe00ff 202px)"></i><i style="top:467px;left:114px;width:196px;background:linear-gradient(90deg,#0057ff 0,#0046ff 36px,#1745ff 37px,#2a44ff 39px,#4440ff 45px,#6437ff 59px,#8d1aff 88px,#9707ff 97px,#9a00ff 99px,#f800ff 196px)"></i><i style="top:469px;left:115px;width:190px;background:linear-gradient(90deg,#0054ff 0,#0043ff 35px,#1a42ff 36px,#3140ff 39px,#4c3bff 47px,#6e2eff 64px,#8c15ff 86px,#9307ff 92px,#9500ff 94px,#f300ff 190px)"></i><i style="top:471px;left:115px;width:185px;background:linear-gradient(90deg,#0052ff 0,#0040ff 35px,#1c3fff 36px,#2c3eff 38px,#453aff 44px,#6b2cff 62px,#8813ff 83px,#9000ff 90px,#dc00ff 166px,#ed00ff 185px)"></i><i style="top:473px;left:116px;width:180px;background:linear-gradient(90deg,#004fff 0,#003dff 33px,#0c3dff 34px,#1e3cff 35px,#333aff 38px,#5034ff 47px,#7422ff 67px,#860dff 81px,#8b00ff 85px,#c900ff 145px,#e900ff 180px)"></i><i style="top:475px;left:117px;width:174px;background:linear-gradient(90deg,#004cff 0,#003aff 32px,#133aff 33px,#2838ff 35px,#3f35ff 40px,#5f2bff 53px,#7f11ff 74px,#8800ff 81px,#da00ff 163px,#e400ff 174px)"></i><i style="top:477px;left:118px;width:168px;background:linear-gradient(90deg,#0049ff 0,#0037ff 31px,#1637ff 32px,#2a35ff 34px,#4630ff 41px,#6821ff 57px,#7c0dff 71px,#8100ff 75px,#ba00ff 128px,#de00ff 168px)"></i><i style="top:479px;left:119px;width:163px;background:linear-gradient(90deg,#0046ff 0,#0034ff 30px,#1933ff 31px,#2b32ff 33px,#432dff 39px,#6121ff 52px,#780bff 67px,#7c00ff 70px,#b500ff 122px,#da00ff 163px)"></i><i style="top:481px;left:120px;width:157px;background:linear-gradient(90deg,#0043ff 0,#0031ff 29px,#1c30ff 30px,#312eff 33px,#4c27ff 41px,#6e11ff 59px,#7800ff 66px,#ac00ff 112px,#d500ff 157px)"></i><i style="top:483px;left:121px;width:151px;background:linear-gradient(90deg,#0040ff 0,#002eff 27px,#0c2dff 28px,#1e2dff 29px,#322aff 32px,#4f22ff 41px,#6c0bff 57px,#7100ff 60px,#9e00ff 98px,#d000ff 151px)"></i><i style="top:485px;left:122px;width:146px;background:linear-gradient(90deg,#003cff 0,#002bff 26px,#2029ff 28px,#3725ff 32px,#511cff 41px,#6808ff 53px,#6b00ff 55px,#9a00ff 93px,#cc00ff 146px)"></i><i style="top:487px;left:123px;width:140px;background:linear-gradient(90deg,#0039ff 0,#0027ff 25px,#1626ff 26px,#2924ff 28px,#3f1fff 33px,#5e0dff 46px,#6500ff 50px,#9000ff 83px,#c700ff 140px)"></i><i style="top:489px;left:124px;width:134px;background:linear-gradient(90deg,#0036ff 0,#0023ff 24px,#1922ff 25px,#301fff 28px,#4b15ff 36px,#5c05ff 44px,#6000ff 46px,#8900ff 76px,#c200ff 134px)"></i><i style="top:491px;left:125px;width:129px;background:linear-gradient(90deg,#0032ff 0,#001fff 23px,#1c1eff 24px,#311aff 27px,#4b0fff 35px,#5800ff 41px,#7900ff 62px,#aa00ff 107px,#be00ff 129px)"></i><i style="top:493px;left:126px;width:123px;background:linear-gradient(90deg,#002eff 0,#001bff 21px,#0c1aff 22px,#1e19ff 23px,#3614ff 27px,#4b05ff 34px,#5000ff 36px,#7100ff 55px,#9f00ff 95px,#ba00ff 123px)"></i><i style="top:495px;left:127px;width:117px;background:linear-gradient(90deg,#002aff 0,#0016ff 20px,#2014ff 22px,#360dff 26px,#4400ff 30px,#6200ff 44px,#8c00ff 76px,#b500ff 117px)"></i><i style="top:497px;left:128px;width:112px;background:linear-gradient(90deg,#0026ff 0,#0010ff 19px,#160fff 20px,#290bff 22px,#3700ff 25px,#5300ff 35px,#7800ff 58px,#a900ff 104px,#b100ff 112px)"></i><i style="top:499px;left:129px;width:106px;background:linear-gradient(90deg,#0021ff 0,#000bff 17px,#0009ff 18px,#1906ff 19px,#2300ff 20px,#3800ff 24px,#5500ff 35px,#7900ff 58px,#ac00ff 106px)"></i><i style="top:501px;left:130px;width:100px;background:linear-gradient(90deg,#001cff 0,#0009ff 13px,#0000ff 15px,#0000ff 17px,#1b00ff 18px,#3000ff 21px,#4d00ff 30px,#7000ff 50px,#9f00ff 92px,#a700ff 100px)"></i><i style="top:503px;left:132px;width:93px;background:linear-gradient(90deg,#0015ff 0,#0006ff 8px,#0000ff 10px,#0000ff 14px,#0c00ff 15px,#1e00ff 16px,#3500ff 20px,#4f00ff 29px,#7100ff 49px,#a000ff 91px,#a200ff 93px)"></i><i style="top:505px;left:133px;width:88px;background:linear-gradient(90deg,#000dff 0,#0000ff 5px,#0000ff 13px,#1f00ff 15px,#3600ff 19px,#5400ff 30px,#7e00ff 58px,#9e00ff 88px)"></i><i style="top:507px;left:134px;width:82px;background:linear-gradient(90deg,#0000ff 0,#0000ff 12px,#1600ff 13px,#2800ff 15px,#4100ff 21px,#6100ff 36px,#8a00ff 68px,#9900ff 82px)"></i><i style="top:509px;left:136px;width:75px;background:linear-gradient(90deg,#0000ff 0,#0000ff 10px,#1900ff 11px,#2900ff 13px,#4100ff 19px,#6100ff 34px,#8a00ff 66px,#9400ff 75px)"></i><i style="top:511px;left:137px;width:70px;background:linear-gradient(90deg,#0000ff 0,#0000ff 9px,#1b00ff 10px,#3000ff 13px,#4900ff 21px,#6900ff 38px,#8f00ff 70px)"></i><i style="top:513px;left:139px;width:63px;background:linear-gradient(90deg,#0000ff 0,#0000ff 6px,#1d00ff 8px,#3500ff 12px,#5300ff 23px,#7a00ff 49px,#8a00ff 63px)"></i><i style="top:515px;left:141px;width:56px;background:linear-gradient(90deg,#0000ff 0,#0000ff 4px,#1f00ff 6px,#3500ff 10px,#5100ff 20px,#7500ff 43px,#8400ff 56px)"></i><i style="top:517px;left:143px;width:50px;background:linear-gradient(90deg,#0000ff 0,#0000ff 2px,#1600ff 3px,#2800ff 5px,#4000ff 11px,#6000ff 26px,#8000ff 50px)"></i><i style="top:519px;left:145px;width:43px;background:linear-gradient(90deg,#0000ff 0,#1900ff 1px,#2e00ff 4px,#4800ff 12px,#6600ff 28px,#7a00ff 43px)"></i><i style="top:521px;left:147px;width:36px;background:linear-gradient(90deg,#2400ff 0,#3e00ff 6px,#6000ff 22px,#7400ff 36px)"></i><i style="top:523px;left:150px;width:29px;background:linear-gradient(90deg,#3400ff 0,#5000ff 10px,#6f00ff 29px)"></i><i style="top:525px;left:152px;width:22px;background:linear-gradient(90deg,#3c00ff 0,#5800ff 12px,#6800ff 22px)"></i><i style="top:527px;left:155px;width:14px;background:linear-gradient(90deg,#4500ff 0,#6000ff 14px)"></i><i style="top:529px;left:157px;width:8px;background:linear-gradient(90deg,#4a00ff 0,#5a00ff 8px)"></i></div>
<div id="sq"><i style="top:0;background:linear-gradient(180deg,rgba(0,0,0,0.000) 0%,rgba(0,0,0,0.024) 12%,rgba(0,0,0,0.060) 25%,rgba(17,17,17,0.112) 38%,rgba(34,34,34,0.172) 50%,rgba(67,67,67,0.236) 56%,rgba(96,96,96,0.332) 62%,rgba(112,112,112,0.464) 70%,rgba(121,121,121,0.640) 80%,rgba(130,130,130,0.856) 90%,rgba(133,133,133,0.960) 96%,rgba(133,133,133,1.000) 100%),linear-gradient(90deg,#ff1900 0.0%,#ff3200 3.0%,#ff7800 6.5%,#ffc300 11.0%,#ffee00 14.0%,#fafa00 17.0%,#e4f800 20.0%,#96f000 25.0%,#64ee00 29.0%,#55ee00 36.0%,#3ce86e 42.0%,#3ceed7 47.0%,#46f0ff 50.0%,#1ec8ff 53.0%,#0082ff 57.0%,#004bfa 61.0%,#0032ff 66.7%,#192dff 71.0%,#7832ff 74.5%,#c83cfa 78.0%,#fa32f0 83.3%,#ff23b9 88.0%,#ff1955 92.5%,#ff1914 96.0%,#ff1900 100.0%)"></i></div>
<svg width="797" height="652" viewBox="0 0 797 652" shape-rendering="crispEdges">
<defs><filter id="bl" x="-20%" y="-20%" width="140%" height="140%"><feGaussianBlur stdDeviation="0.45"/></filter></defs>
<g shape-rendering="auto" filter="url(#bl)"><rect x="9" y="7" width="16" height="16" fill="#050505"/><ellipse cx="11.8" cy="15.9" rx="2.5" ry="1.5" fill="#58c0c8"/><path d="M13.8 13 L17.3 10.6" stroke="#2c7078" stroke-width="1.1" fill="none"/><path d="M16 14 L19.3 11.5 L19.8 17 L17 19.6 L15.4 18.6Z" fill="#a82810"/><path d="M20.2 9.8 L22 12.5 L23.4 18.2 L21.6 16.6 L20.2 17.2Z" fill="#c02c1c"/><path d="M19.1 8.6 C20.3 11 20.4 15 19.9 17 C19.2 19.6 17.2 21.2 15.8 21.4 L15.5 19.5 C17 19.3 18.5 17.8 18.7 15.5 C18.9 13 18.9 10.5 18.6 8.8Z" fill="#f8c832"/></g>
<g shape-rendering="auto">
<text x="31" y="20" font-size="12.3" textLength="84.5" lengthAdjust="spacingAndGlyphs">Gamutvision 1.4</text>
<text x="8.5" y="44.5" font-size="12" textLength="17.5" lengthAdjust="spacingAndGlyphs">File</text>
<text x="40" y="44.5" font-size="12" textLength="42" lengthAdjust="spacingAndGlyphs">Settings</text>
<text x="96" y="44.5" font-size="12" textLength="25" lengthAdjust="spacingAndGlyphs">Help</text>
<path d="M677 15.5h10" stroke="#000" stroke-width="1.2" fill="none"/>
<rect x="722.5" y="10.5" width="9" height="9" rx="1" fill="none" stroke="#000" stroke-width="1.2"/>
<path d="M768 10.2l10 10M778 10.2l-10 10" stroke="#000" stroke-width="1.2" fill="none"/>
</g>
<rect x="794" y="50" width="1.5" height="598" fill="#c6c6c6"/>
<rect x="58" y="75" width="442" height="1" fill="#000"/>
<rect x="58" y="533" width="442" height="1" fill="#000"/>
<rect x="58" y="75" width="1" height="459" fill="#000"/>
<rect x="498" y="75" width="2" height="459" fill="#000"/>
<text x="58.5" y="547.5" font-size="11" text-anchor="middle" shape-rendering="auto">0</text>
<rect x="117" y="529" width="1" height="4" fill="#000"/>
<rect x="117" y="76" width="1" height="4" fill="#000"/>
<text x="117.63" y="547.5" font-size="11" text-anchor="middle" shape-rendering="auto">0.1</text>
<rect x="176" y="529" width="1" height="4" fill="#000"/>
<rect x="176" y="76" width="1" height="4" fill="#000"/>
<text x="176.76" y="547.5" font-size="11" text-anchor="middle" shape-rendering="auto">0.2</text>
<rect x="235" y="529" width="1" height="4" fill="#000"/>
<rect x="235" y="76" width="1" height="4" fill="#000"/>
<text x="235.89" y="547.5" font-size="11" text-anchor="middle" shape-rendering="auto">0.3</text>
<rect x="295" y="529" width="1" height="4" fill="#000"/>
<rect x="295" y="76" width="1" height="4" fill="#000"/>
<text x="295.02" y="547.5" font-size="11" text-anchor="middle" shape-rendering="auto">0.4</text>
<rect x="354" y="529" width="1" height="4" fill="#000"/>
<rect x="354" y="76" width="1" height="4" fill="#000"/>
<text x="354.15" y="547.5" font-size="11" text-anchor="middle" shape-rendering="auto">0.5</text>
<rect x="413" y="529" width="1" height="4" fill="#000"/>
<rect x="413" y="76" width="1" height="4" fill="#000"/>
<text x="413.28" y="547.5" font-size="11" text-anchor="middle" shape-rendering="auto">0.6</text>
<rect x="472" y="529" width="1" height="4" fill="#000"/>
<rect x="472" y="76" width="1" height="4" fill="#000"/>
<text x="472.41" y="547.5" font-size="11" text-anchor="middle" shape-rendering="auto">0.7</text>
<text x="52.5" y="537.2" font-size="11" text-anchor="end">0</text>
<rect x="59" y="479" width="4" height="1" fill="#000"/>
<rect x="494" y="479" width="4" height="1" fill="#000"/>
<text x="52.5" y="482.82" font-size="11" text-anchor="end">0.1</text>
<rect x="59" y="424" width="4" height="1" fill="#000"/>
<rect x="494" y="424" width="4" height="1" fill="#000"/>
<text x="52.5" y="428.44" font-size="11" text-anchor="end">0.2</text>
<rect x="59" y="370" width="4" height="1" fill="#000"/>
<rect x="494" y="370" width="4" height="1" fill="#000"/>
<text x="52.5" y="374.06" font-size="11" text-anchor="end">0.3</text>
<rect x="59" y="315" width="4" height="1" fill="#000"/>
<rect x="494" y="315" width="4" height="1" fill="#000"/>
<text x="52.5" y="319.68" font-size="11" text-anchor="end">0.4</text>
<rect x="59" y="261" width="4" height="1" fill="#000"/>
<rect x="494" y="261" width="4" height="1" fill="#000"/>
<text x="52.5" y="265.3" font-size="11" text-anchor="end">0.5</text>
<rect x="59" y="207" width="4" height="1" fill="#000"/>
<rect x="494" y="207" width="4" height="1" fill="#000"/>
<text x="52.5" y="210.92" font-size="11" text-anchor="end">0.6</text>
<rect x="59" y="152" width="4" height="1" fill="#000"/>
<rect x="494" y="152" width="4" height="1" fill="#000"/>
<text x="52.5" y="156.54" font-size="11" text-anchor="end">0.7</text>
<rect x="59" y="98" width="4" height="1" fill="#000"/>
<rect x="494" y="98" width="4" height="1" fill="#000"/>
<text x="52.5" y="102.16" font-size="11" text-anchor="end">0.8</text>
<clipPath id="hs"><path d="M161.0 530.9 L159.9 530.8 L158.2 529.6 L149.2 522.3 L145.4 519.0 L142.7 516.4 L139.7 513.2 L134.8 506.6 L131.9 502.1 L128.7 496.6 L123.3 486.3 L117.1 472.6 L110.0 455.0 L104.6 440.8 L99.1 424.4 L93.6 405.6 L88.1 384.5 L82.6 361.1 L77.3 335.8 L72.4 309.1 L70.2 295.4 L66.3 267.9 L64.7 254.2 L62.2 227.4 L61.4 214.4 L60.9 201.7 L60.7 189.4 L60.8 177.4 L61.3 165.9 L62.1 154.9 L63.3 144.5 L64.8 134.7 L66.7 125.5 L69.0 117.2 L71.7 109.6 L74.7 102.8 L77.9 96.9 L81.5 91.9 L85.3 87.9 L89.3 84.7 L93.6 82.4 L97.9 80.9 L102.4 80.1 L107.0 79.9 L111.7 80.3 L116.4 81.3 L121.2 82.6 L126.0 84.2 L135.7 88.2 L140.5 90.4 L150.0 95.3 L159.2 100.4 L168.1 105.7 L176.9 111.3 L185.6 117.2 L194.3 123.3 L207.1 132.9 L224.2 146.5 L241.1 160.6 L262.2 178.9 L283.3 197.7 L329.4 239.4 L492.9 389.2Z"/></clipPath>
<path d="M115 424.5h5M117.5 422v5M115 370.5h5M117.5 368v5M115 315.5h5M117.5 313v5M115 261.5h5M117.5 259v5M115 207.5h5M117.5 205v5M115 152.5h5M117.5 150v5M115 98.5h5M117.5 96v5M174 479.5h5M176.5 477v5M174 424.5h5M176.5 422v5M174 370.5h5M176.5 368v5M174 315.5h5M176.5 313v5M174 261.5h5M176.5 259v5M174 207.5h5M176.5 205v5M174 152.5h5M176.5 150v5M233 479.5h5M235.5 477v5M233 424.5h5M235.5 422v5M233 370.5h5M235.5 368v5M233 315.5h5M235.5 313v5M233 261.5h5M235.5 259v5M233 207.5h5M235.5 205v5M293 424.5h5M295.5 422v5M293 370.5h5M295.5 368v5M293 315.5h5M295.5 313v5M293 261.5h5M295.5 259v5M352 424.5h5M354.5 422v5M352 370.5h5M354.5 368v5M352 315.5h5M354.5 313v5M411 370.5h5M413.5 368v5" stroke="#b0b0b0" stroke-opacity=".6" stroke-width="1" fill="none"/>
<path d="M115 479.5h5M117.5 477v5M233 152.5h5M235.5 150v5M293 207.5h5M295.5 205v5M352 261.5h5M354.5 259v5M411 424.5h5M413.5 422v5M411 315.5h5M413.5 313v5M470 370.5h5M472.5 368v5" stroke="#c0c0c0" stroke-opacity=".45" stroke-width="1" fill="none"/>
<rect x="58" y="534" width="1" height="2" fill="#c4c4c4"/>
<rect x="117" y="534" width="1" height="2" fill="#c4c4c4"/>
<rect x="176" y="534" width="1" height="2" fill="#c4c4c4"/>
<rect x="235" y="534" width="1" height="2" fill="#c4c4c4"/>
<rect x="295" y="534" width="1" height="2" fill="#c4c4c4"/>
<rect x="354" y="534" width="1" height="2" fill="#c4c4c4"/>
<rect x="413" y="534" width="1" height="2" fill="#c4c4c4"/>
<rect x="472" y="534" width="1" height="2" fill="#c4c4c4"/>
<rect x="56" y="533" width="2" height="1" fill="#c4c4c4"/>
<rect x="56" y="479" width="2" height="1" fill="#c4c4c4"/>
<rect x="56" y="424" width="2" height="1" fill="#c4c4c4"/>
<rect x="56" y="370" width="2" height="1" fill="#c4c4c4"/>
<rect x="56" y="315" width="2" height="1" fill="#c4c4c4"/>
<rect x="56" y="261" width="2" height="1" fill="#c4c4c4"/>
<rect x="56" y="207" width="2" height="1" fill="#c4c4c4"/>
<rect x="56" y="152" width="2" height="1" fill="#c4c4c4"/>
<rect x="56" y="98" width="2" height="1" fill="#c4c4c4"/>
<g shape-rendering="auto">
<path d="M161.0 530.9 L159.9 530.8 L158.2 529.6 L149.2 522.3 L145.4 519.0 L142.7 516.4 L139.7 513.2 L134.8 506.6 L131.9 502.1 L128.7 496.6 L123.3 486.3 L117.1 472.6 L110.0 455.0 L104.6 440.8 L99.1 424.4 L93.6 405.6 L88.1 384.5 L82.6 361.1 L77.3 335.8 L72.4 309.1 L70.2 295.4 L66.3 267.9 L64.7 254.2 L62.2 227.4 L61.4 214.4 L60.9 201.7 L60.7 189.4 L60.8 177.4 L61.3 165.9 L62.1 154.9 L63.3 144.5 L64.8 134.7 L66.7 125.5 L69.0 117.2 L71.7 109.6 L74.7 102.8 L77.9 96.9 L81.5 91.9 L85.3 87.9 L89.3 84.7 L93.6 82.4 L97.9 80.9 L102.4 80.1 L107.0 79.9 L111.7 80.3 L116.4 81.3 L121.2 82.6 L126.0 84.2 L135.7 88.2 L140.5 90.4 L150.0 95.3 L159.2 100.4 L168.1 105.7 L176.9 111.3 L185.6 117.2 L194.3 123.3 L207.1 132.9 L224.2 146.5 L241.1 160.6 L262.2 178.9 L283.3 197.7 L329.4 239.4 L492.9 389.2Z" fill="none" stroke="#242424" stroke-width="2.2" stroke-linejoin="round"/>
<path d="M442.0 353.6 L248.4 208.4 L150.7 497.6Z" fill="none" stroke="#000" stroke-width="1.6" stroke-dasharray="1.8 2.2"/>
<path d="M155.3 485.3 L165.6 453 L175.9 421.4 L185.6 395 L195.8 367.9 L209.3 334 L222.8 300 L259.2 200.7 L355 279 L446.2 350.3 L390 379 L350 398 L320 413.5 L300 424 L270 434 L230 451.3Z" fill="none" stroke="#000" stroke-width="2.2" stroke-linejoin="miter"/>
<circle cx="260.5" cy="338.2" r="1.8" fill="#404040"/>
<circle cx="161.0" cy="530.9" r="3.7" fill="#3500bc" stroke="#c0c0c8" stroke-opacity=".5" stroke-width="1"/>
<text x="146.4" y="530.5" font-size="12" fill="#ececec" text-anchor="end">400</text>
<circle cx="131.9" cy="502.1" r="3.7" fill="#0026bc" stroke="#c0c0c8" stroke-opacity=".5" stroke-width="1"/>
<text x="121.5" y="505.5" font-size="12" fill="#ececec" text-anchor="end">470</text>
<circle cx="112.5" cy="461.3" r="3.7" fill="#0059bc" stroke="#c0c0c8" stroke-opacity=".5" stroke-width="1"/>
<text x="101.6" y="464.3" font-size="12" fill="#ececec" text-anchor="end">480</text>
<circle cx="85.3" cy="373.1" r="3.7" fill="#0099bc" stroke="#c0c0c8" stroke-opacity=".5" stroke-width="1"/>
<text x="94.3" y="377" font-size="12" fill="#3c3c3c">490</text>
<circle cx="63.3" cy="240.7" r="3.7" fill="#00bc8c" stroke="#c0c0c8" stroke-opacity=".5" stroke-width="1"/>
<text x="72.1" y="245" font-size="12" fill="#3c3c3c">500</text>
<circle cx="66.7" cy="125.5" r="3.7" fill="#00ea62" stroke="#c0c0c8" stroke-opacity=".5" stroke-width="1"/>
<text x="75.5" y="129.4" font-size="12" fill="#3c3c3c">510</text>
<circle cx="102.4" cy="80.1" r="3.7" fill="#00ea11" stroke="#c0c0c8" stroke-opacity=".5" stroke-width="1"/>
<text x="87" y="86.7" font-size="12" fill="#ececec" text-anchor="end">520</text>
<circle cx="150.0" cy="95.3" r="3.7" fill="#00ea00" stroke="#c0c0c8" stroke-opacity=".5" stroke-width="1"/>
<text x="159" y="99.5" font-size="12" fill="#ececec">530</text>
<circle cx="194.3" cy="123.3" r="3.7" fill="#29bc00" stroke="#c0c0c8" stroke-opacity=".5" stroke-width="1"/>
<text x="202.5" y="127.8" font-size="12" fill="#ececec">540</text>
<circle cx="279.1" cy="193.9" r="3.7" fill="#82bc00" stroke="#c0c0c8" stroke-opacity=".5" stroke-width="1"/>
<text x="288.5" y="198.3" font-size="12" fill="#ececec">560</text>
<circle cx="361.5" cy="268.9" r="3.7" fill="#bc9800" stroke="#c0c0c8" stroke-opacity=".5" stroke-width="1"/>
<text x="370.4" y="272.8" font-size="12" fill="#ececec">580</text>
<circle cx="429.2" cy="330.9" r="3.7" fill="#bc4400" stroke="#c0c0c8" stroke-opacity=".5" stroke-width="1"/>
<text x="439" y="334.4" font-size="12" fill="#ececec">600</text>
<circle cx="467.4" cy="365.8" r="3.7" fill="#bc0000" stroke="#c0c0c8" stroke-opacity=".5" stroke-width="1"/>
<text x="476.7" y="369.6" font-size="12" fill="#ececec">620</text>
<circle cx="492.9" cy="389.2" r="3.7" fill="#bc0000" stroke="#c0c0c8" stroke-opacity=".5" stroke-width="1"/>
<text x="481.6" y="391.9" font-size="12" fill="#7a1830" text-anchor="end">700</text>
<text x="171" y="65.6" font-size="13.3" font-weight="bold" textLength="212.3" lengthAdjust="spacingAndGlyphs">CIE 1931 xy Chromaticity diagram</text>
<text x="486.2" y="91" font-size="10.9" font-weight="bold" fill="#fff" text-anchor="end">Input:  *sRGB</text>
<text x="486.2" y="105" font-size="10.9" font-weight="bold" fill="#fff" text-anchor="end" textLength="141" lengthAdjust="spacingAndGlyphs">Output: XL2546X_fps1.icm</text>
<text x="486.2" y="119" font-size="10.9" font-weight="bold" fill="#fff" text-anchor="end" textLength="167.4" lengthAdjust="spacingAndGlyphs">White point:  x = 0.343  y = 0.359</text>
<text x="486.2" y="133" font-size="10.9" font-weight="bold" fill="#fff" text-anchor="end">03-May-2024 18:26:29</text>
<text x="276" y="562.5" font-size="11" font-weight="bold" text-anchor="middle">x</text>
<text transform="translate(26.1,304.7) rotate(-90)" font-size="11" font-weight="bold" text-anchor="middle">y</text>
</g>
<rect x="553" y="298" width="13" height="12" fill="#fff"/>
<rect x="553" y="298" width="12" height="11" fill="#8c8c8c"/>
<rect x="554.5" y="299.5" width="11" height="10" fill="#fff"/>
<g shape-rendering="auto">
<text x="570.6" y="308.6" font-size="12" textLength="27.5" lengthAdjust="spacingAndGlyphs">Zoom</text>
</g>
<rect x="616" y="290" width="175" height="28" fill="#000"/>
<rect x="617" y="291" width="173" height="26" fill="#808080"/>
<rect x="622" y="294.5" width="38.7" height="20" fill="#8a8a8a"/>
<rect x="622" y="294.5" width="37.7" height="19" fill="#fff"/>
<rect x="623" y="295.5" width="36.7" height="18" fill="#b0b0b0"/>
<rect x="623" y="295.5" width="35.7" height="17" fill="#f0f0f0"/>
<g shape-rendering="auto">
<text x="634.5" y="309.1" font-size="12" textLength="15.5" lengthAdjust="spacingAndGlyphs">Inp</text>
</g>
<rect x="664.5" y="294.5" width="38.7" height="20" fill="#8a8a8a"/>
<rect x="664.5" y="294.5" width="37.7" height="19" fill="#fff"/>
<rect x="665.5" y="295.5" width="36.7" height="18" fill="#b0b0b0"/>
<rect x="665.5" y="295.5" width="35.7" height="17" fill="#f0f0f0"/>
<g shape-rendering="auto">
<text x="675.3" y="309.1" font-size="12" textLength="17" lengthAdjust="spacingAndGlyphs">I&gt;M</text>
</g>
<rect x="707" y="294.5" width="38.3" height="20" fill="#8a8a8a"/>
<rect x="707" y="294.5" width="37.3" height="19" fill="#fff"/>
<rect x="708" y="295.5" width="36.3" height="18" fill="#b0b0b0"/>
<rect x="708" y="295.5" width="35.3" height="17" fill="#f0f0f0"/>
<g shape-rendering="auto">
<text x="715.7" y="309.1" font-size="12" textLength="22.8" lengthAdjust="spacingAndGlyphs">Outp</text>
</g>
<rect x="750" y="294.5" width="38.5" height="20" fill="#101010"/>
<rect x="750" y="294.5" width="37.5" height="19" fill="#fff"/>
<rect x="751" y="295.5" width="36.5" height="18" fill="#404040"/>
<rect x="751" y="295.5" width="35.5" height="17" fill="#ffffd0"/>
<g shape-rendering="auto">
<text x="756.2" y="309.1" font-size="12" font-weight="bold" textLength="24.3" lengthAdjust="spacingAndGlyphs" stroke="#000" stroke-width=".35">O&gt;M</text>
</g>
<rect x="553" y="316" width="48" height="19.5" fill="#8a8a8a"/>
<rect x="553" y="316" width="47" height="18.5" fill="#fff"/>
<rect x="554" y="317" width="46" height="17.5" fill="#b0b0b0"/>
<rect x="554" y="317" width="45" height="16.5" fill="#f0f0f0"/>
<g shape-rendering="auto">
<text x="562.7" y="329.5" font-size="12" textLength="27.5" lengthAdjust="spacingAndGlyphs">Z-Out</text>
</g>
<g shape-rendering="auto">
<text x="630.4" y="334" font-size="12" textLength="75.2" lengthAdjust="spacingAndGlyphs">Black Pt. Comp.</text>
</g>
<rect x="709" y="320" width="79" height="18" fill="#fff"/>
<rect x="709" y="320" width="78" height="17" fill="#a0a0a0"/>
<rect x="710" y="321" width="77" height="16" fill="#8a8a8a"/>
<rect x="711" y="322" width="76" height="15" fill="#fff"/>
<rect x="771" y="322" width="16" height="15" fill="#8a8a8a"/>
<rect x="771" y="322" width="15" height="14" fill="#fff"/>
<rect x="772" y="323" width="14" height="13" fill="#b0b0b0"/>
<rect x="772" y="323" width="13" height="12" fill="#f0f0f0"/>
<path shape-rendering="auto" d="M775 327.5h8l-4 4.3z" fill="#000"/>
<g shape-rendering="auto">
<text x="713.5" y="334" font-size="12" textLength="13.3" lengthAdjust="spacingAndGlyphs">Off</text>
</g>
<rect x="553" y="340.5" width="239" height="27.5" fill="#000"/>
<rect x="554" y="341.5" width="237" height="25.5" fill="#808080"/>
<rect x="556" y="343.5" width="232" height="19.5" fill="#fff"/>
<rect x="556" y="343.5" width="231" height="18.5" fill="#a0a0a0"/>
<rect x="557" y="344.5" width="230" height="17.5" fill="#8a8a8a"/>
<rect x="558" y="345.5" width="229" height="16.5" fill="#fff"/>
<rect x="771" y="345.5" width="16" height="16.5" fill="#8a8a8a"/>
<rect x="771" y="345.5" width="15" height="15.5" fill="#fff"/>
<rect x="772" y="346.5" width="14" height="14.5" fill="#b0b0b0"/>
<rect x="772" y="346.5" width="13" height="13.5" fill="#f0f0f0"/>
<path shape-rendering="auto" d="M775 351.75h8l-4 4.3z" fill="#000"/>
<g shape-rendering="auto">
<text x="560.2" y="358.3" font-size="12" font-weight="bold" textLength="182.4" lengthAdjust="spacingAndGlyphs" stroke="#000" stroke-width=".35">xy Chromaticity (Saturation map)</text>
</g>
<rect x="553" y="369" width="240" height="129" fill="#000"/>
<rect x="554" y="370" width="238" height="127" fill="#f0f0f0"/>
<rect x="558.5" y="374.5" width="79.5" height="23" fill="#8a8a8a"/>
<rect x="558.5" y="374.5" width="78.5" height="22" fill="#fff"/>
<rect x="559.5" y="375.5" width="77.5" height="21" fill="#b0b0b0"/>
<rect x="559.5" y="375.5" width="76.5" height="20" fill="#f0f0f0"/>
<g shape-rendering="auto">
<text x="570.3" y="390.4" font-size="12" fill="#a0a0a0" textLength="56" lengthAdjust="spacingAndGlyphs">Reset scale</text>
</g>
<rect x="642.5" y="374.5" width="75.5" height="23" fill="#8a8a8a"/>
<rect x="642.5" y="374.5" width="74.5" height="22" fill="#fff"/>
<rect x="643.5" y="375.5" width="73.5" height="21" fill="#b0b0b0"/>
<rect x="643.5" y="375.5" width="72.5" height="20" fill="#f0f0f0"/>
<g shape-rendering="auto">
<text x="654" y="390.4" font-size="12" fill="#a0a0a0" textLength="52.2" lengthAdjust="spacingAndGlyphs">Reset view</text>
</g>
<rect x="723.5" y="374.5" width="65.3" height="23" fill="#8a8a8a"/>
<rect x="723.5" y="374.5" width="64.3" height="22" fill="#fff"/>
<rect x="724.5" y="375.5" width="63.3" height="21" fill="#b0b0b0"/>
<rect x="724.5" y="375.5" width="62.3" height="20" fill="#f0f0f0"/>
<g shape-rendering="auto">
<text x="735.3" y="390.4" font-size="12" fill="#a0a0a0" textLength="43" lengthAdjust="spacingAndGlyphs">Top view</text>
</g>
<rect x="558" y="404.5" width="13" height="12" fill="#fff"/>
<rect x="558" y="404.5" width="12" height="11" fill="#8c8c8c"/>
<rect x="559.5" y="406" width="11" height="10" fill="#fff"/>
<g shape-rendering="auto"><path d="M561.2 410.1l2.3 2.4l4.2 -4.6" stroke="#000" stroke-width="1.7" fill="none"/></g>
<g shape-rendering="auto">
<text x="576" y="414.2" font-size="12" textLength="40.1" lengthAdjust="spacingAndGlyphs">Wavelth</text>
</g>
<rect x="627" y="402" width="161.5" height="19" fill="#fff"/>
<rect x="627" y="402" width="160.5" height="18" fill="#a0a0a0"/>
<rect x="628" y="403" width="159.5" height="17" fill="#8a8a8a"/>
<rect x="629" y="404" width="158.5" height="16" fill="#fff"/>
<rect x="771.5" y="404" width="16" height="16" fill="#8a8a8a"/>
<rect x="771.5" y="404" width="15" height="15" fill="#fff"/>
<rect x="772.5" y="405" width="14" height="14" fill="#b0b0b0"/>
<rect x="772.5" y="405" width="13" height="13" fill="#f0f0f0"/>
<path shape-rendering="auto" d="M775.5 410h8l-4 4.3z" fill="#000"/>
<g shape-rendering="auto">
<text x="631" y="416" font-size="12" textLength="122" lengthAdjust="spacingAndGlyphs">Normal/gamut boundaries</text>
</g>
<rect x="553" y="468" width="87" height="30" fill="#000"/>
<rect x="554" y="469" width="85" height="28" fill="#f0f0f0"/>
<rect x="558" y="473" width="77" height="20.5" fill="#8a8a8a"/>
<rect x="558" y="473" width="76" height="19.5" fill="#fff"/>
<rect x="559" y="474" width="75" height="18.5" fill="#b0b0b0"/>
<rect x="559" y="474" width="74" height="17.5" fill="#f0f0f0"/>
<g shape-rendering="auto">
<text x="568.7" y="487.1" font-size="12" font-weight="bold" textLength="54.4" lengthAdjust="spacingAndGlyphs" stroke="#000" stroke-width=".35">Print Test</text>
</g>
<rect x="553" y="497" width="240" height="31" fill="#000"/>
<rect x="554" y="498" width="238" height="29" fill="#f0f0f0"/>
<rect x="558" y="503" width="230.5" height="19" fill="#fff"/>
<rect x="558" y="503" width="229.5" height="18" fill="#a0a0a0"/>
<rect x="559" y="504" width="228.5" height="17" fill="#8a8a8a"/>
<rect x="560" y="505" width="227.5" height="16" fill="#f0f0f0"/>
<g shape-rendering="auto">
<text x="644.6" y="517.3" font-size="12" textLength="57.5" lengthAdjust="spacingAndGlyphs">not selected</text>
</g>
<rect x="559" y="532" width="143.5" height="56" fill="#000"/>
<rect x="560" y="533" width="141.5" height="54" fill="#f0f0f0"/>
<g shape-rendering="auto">
<text x="569.7" y="548.6" font-size="12" font-weight="bold" textLength="52.1" lengthAdjust="spacingAndGlyphs" stroke="#000" stroke-width=".35">Display A</text>
</g>
<rect x="650" y="536.5" width="47" height="22.5" fill="#8a8a8a"/>
<rect x="650" y="536.5" width="46" height="21.5" fill="#fff"/>
<rect x="651" y="537.5" width="45" height="20.5" fill="#b0b0b0"/>
<rect x="651" y="537.5" width="44" height="19.5" fill="#f0f0f0"/>
<g shape-rendering="auto">
<text x="659.4" y="551.6" font-size="12" font-weight="bold" textLength="26.9" lengthAdjust="spacingAndGlyphs" stroke="#000" stroke-width=".35">View</text>
</g>
<rect x="563.5" y="561.5" width="38" height="19" fill="#fff"/>
<rect x="563.5" y="561.5" width="37" height="18" fill="#a0a0a0"/>
<rect x="564.5" y="562.5" width="36" height="17" fill="#8a8a8a"/>
<rect x="565.5" y="563.5" width="35" height="16" fill="#fff"/>
<rect x="584.5" y="563.5" width="16" height="16" fill="#8a8a8a"/>
<rect x="584.5" y="563.5" width="15" height="15" fill="#fff"/>
<rect x="585.5" y="564.5" width="14" height="14" fill="#b0b0b0"/>
<rect x="585.5" y="564.5" width="13" height="13" fill="#f0f0f0"/>
<path shape-rendering="auto" d="M588.5 569.5h8l-4 4.3z" fill="#000"/>
<g shape-rendering="auto">
<text x="566.5" y="575.8" font-size="12">1</text>
</g>
<g shape-rendering="auto">
<text x="611.4" y="575.3" font-size="12" textLength="9.6" lengthAdjust="spacingAndGlyphs">IN</text>
</g>
<g shape-rendering="auto">
<text x="628.8" y="575.3" font-size="12" textLength="20.5" lengthAdjust="spacingAndGlyphs">OUT</text>
</g>
<rect x="659" y="561.5" width="38" height="19" fill="#fff"/>
<rect x="659" y="561.5" width="37" height="18" fill="#a0a0a0"/>
<rect x="660" y="562.5" width="36" height="17" fill="#8a8a8a"/>
<rect x="661" y="563.5" width="35" height="16" fill="#fff"/>
<rect x="680" y="563.5" width="16" height="16" fill="#8a8a8a"/>
<rect x="680" y="563.5" width="15" height="15" fill="#fff"/>
<rect x="681" y="564.5" width="14" height="14" fill="#b0b0b0"/>
<rect x="681" y="564.5" width="13" height="13" fill="#f0f0f0"/>
<path shape-rendering="auto" d="M684 569.5h8l-4 4.3z" fill="#000"/>
<g shape-rendering="auto">
<text x="663" y="575.8" font-size="12">3</text>
</g>
<rect x="559" y="592" width="143.5" height="55.5" fill="#000"/>
<rect x="560" y="593" width="141.5" height="53.5" fill="#f0f0f0"/>
<g shape-rendering="auto">
<text x="569.7" y="608.4" font-size="12" font-weight="bold" textLength="51.6" lengthAdjust="spacingAndGlyphs" stroke="#000" stroke-width=".35">Display B</text>
</g>
<rect x="651" y="596.5" width="47" height="22.5" fill="#8a8a8a"/>
<rect x="651" y="596.5" width="46" height="21.5" fill="#fff"/>
<rect x="652" y="597.5" width="45" height="20.5" fill="#b0b0b0"/>
<rect x="652" y="597.5" width="44" height="19.5" fill="#f0f0f0"/>
<g shape-rendering="auto">
<text x="660.4" y="611.7" font-size="12" font-weight="bold" textLength="26.9" lengthAdjust="spacingAndGlyphs" stroke="#000" stroke-width=".35">View</text>
</g>
<rect x="563.5" y="622" width="38" height="19" fill="#fff"/>
<rect x="563.5" y="622" width="37" height="18" fill="#a0a0a0"/>
<rect x="564.5" y="623" width="36" height="17" fill="#8a8a8a"/>
<rect x="565.5" y="624" width="35" height="16" fill="#fff"/>
<rect x="584.5" y="624" width="16" height="16" fill="#8a8a8a"/>
<rect x="584.5" y="624" width="15" height="15" fill="#fff"/>
<rect x="585.5" y="625" width="14" height="14" fill="#b0b0b0"/>
<rect x="585.5" y="625" width="13" height="13" fill="#f0f0f0"/>
<path shape-rendering="auto" d="M588.5 630h8l-4 4.3z" fill="#000"/>
<g shape-rendering="auto">
<text x="566.5" y="636" font-size="12">2</text>
</g>
<g shape-rendering="auto">
<text x="610.5" y="635.2" font-size="12" textLength="9.8" lengthAdjust="spacingAndGlyphs">IN</text>
</g>
<g shape-rendering="auto">
<text x="628" y="635.2" font-size="12" textLength="20.5" lengthAdjust="spacingAndGlyphs">OUT</text>
</g>
<rect x="660" y="622" width="38" height="19" fill="#fff"/>
<rect x="660" y="622" width="37" height="18" fill="#a0a0a0"/>
<rect x="661" y="623" width="36" height="17" fill="#8a8a8a"/>
<rect x="662" y="624" width="35" height="16" fill="#fff"/>
<rect x="681" y="624" width="16" height="16" fill="#8a8a8a"/>
<rect x="681" y="624" width="15" height="15" fill="#fff"/>
<rect x="682" y="625" width="14" height="14" fill="#b0b0b0"/>
<rect x="682" y="625" width="13" height="13" fill="#f0f0f0"/>
<path shape-rendering="auto" d="M685 630h8l-4 4.3z" fill="#000"/>
<g shape-rendering="auto">
<text x="664" y="636" font-size="12">4</text>
</g>
<rect x="720" y="533" width="69" height="22" fill="#8a8a8a"/>
<rect x="720" y="533" width="68" height="21" fill="#fff"/>
<rect x="721" y="534" width="67" height="20" fill="#b0b0b0"/>
<rect x="721" y="534" width="66" height="19" fill="#f0f0f0"/>
<g shape-rendering="auto">
<text x="743.5" y="546.9" font-size="12" textLength="21.9" lengthAdjust="spacingAndGlyphs">Help</text>
</g>
<rect x="720" y="564.5" width="69" height="22" fill="#8a8a8a"/>
<rect x="720" y="564.5" width="68" height="21" fill="#fff"/>
<rect x="721" y="565.5" width="67" height="20" fill="#b0b0b0"/>
<rect x="721" y="565.5" width="66" height="19" fill="#f0f0f0"/>
<g shape-rendering="auto">
<text x="746.7" y="579.1" font-size="12" textLength="16.4" lengthAdjust="spacingAndGlyphs">Exit</text>
</g>
<g shape-rendering="auto"><clipPath id="lg"><rect x="709" y="596" width="80" height="48"/></clipPath><g clip-path="url(#lg)">
<rect x="709" y="596" width="80" height="48" fill="#1a1f9c"/>
<path d="M709.5 596L789 596L789 607Z" fill="#0f7d14"/>
<path d="M709.5 596.2L789 607L789 613.7Z" fill="#fff"/>
<path d="M709.5 596.2L789 613.7L789 618.9Z" fill="#d8441c"/>
<path d="M709.5 596.2L789 618.9L789 622.7Z" fill="#fff"/>
<path d="M709.5 596.2L789 622.7L789 624.4Z" fill="#a020a0"/>
<path d="M709.5 596.2L789 624.4L789 626.4Z" fill="#fff"/>
<path d="M716.5 602.9C722 603.2 731 608.5 740.2 616.8L719.4 624.1C715.5 621 712.5 614 712.4 609.5C712.4 606 714 603 716.5 602.9Z" fill="#ffffc4"/>
</g>
<text x="711.3" y="640.8" font-size="17" fill="#fff" textLength="76.6" lengthAdjust="spacingAndGlyphs" font-style="italic" stroke="#fff" stroke-width=".3" style="font-family:Liberation Serif,Times New Roman,serif">Gamutvision</text>
</g>
<g shape-rendering="auto">
<text x="8.6" y="588.6" font-size="12.5" font-weight="bold" stroke="#000" stroke-width=".35">1</text>
</g>
<rect x="20.5" y="576" width="252" height="18.5" fill="#fff"/>
<rect x="20.5" y="576" width="251" height="17.5" fill="#a0a0a0"/>
<rect x="21.5" y="577" width="250" height="16.5" fill="#8a8a8a"/>
<rect x="22.5" y="578" width="249" height="15.5" fill="#ffffd2"/>
<rect x="255.5" y="578" width="16" height="15.5" fill="#8a8a8a"/>
<rect x="255.5" y="578" width="15" height="14.5" fill="#fff"/>
<rect x="256.5" y="579" width="14" height="13.5" fill="#b0b0b0"/>
<rect x="256.5" y="579" width="13" height="12.5" fill="#f0f0f0"/>
<path shape-rendering="auto" d="M259.5 583.75h8l-4 4.3z" fill="#000"/>
<g shape-rendering="auto">
<text x="24.6" y="589" font-size="12" textLength="145.8" lengthAdjust="spacingAndGlyphs">*sRGB   (IEC6 1996-2.1 sRGB)</text>
</g>
<rect x="277.5" y="576" width="252" height="18.5" fill="#fff"/>
<rect x="277.5" y="576" width="251" height="17.5" fill="#a0a0a0"/>
<rect x="278.5" y="577" width="250" height="16.5" fill="#8a8a8a"/>
<rect x="279.5" y="578" width="249" height="15.5" fill="#f0f0f0"/>
<rect x="512.5" y="578" width="16" height="15.5" fill="#8a8a8a"/>
<rect x="512.5" y="578" width="15" height="14.5" fill="#fff"/>
<rect x="513.5" y="579" width="14" height="13.5" fill="#b0b0b0"/>
<rect x="513.5" y="579" width="13" height="12.5" fill="#f0f0f0"/>
<path shape-rendering="auto" d="M516.5 583.75h8l-4 4.3z" fill="#000"/>
<g shape-rendering="auto">
<text x="282.3" y="589.6" font-size="12" textLength="43.2" lengthAdjust="spacingAndGlyphs">Browse...</text>
</g>
<g shape-rendering="auto">
<text x="535.3" y="588.8" font-size="12.5" font-weight="bold" stroke="#000" stroke-width=".35">3</text>
</g>
<rect x="20" y="596" width="223" height="31.5" fill="#4a7dc8"/>
<rect x="20" y="596" width="1" height="31.5" fill="#1c2c58"/>
<rect x="25" y="601" width="46.5" height="23.5" fill="#0c1428"/>
<rect x="25" y="601" width="45.5" height="22.5" fill="#fff"/>
<rect x="26" y="602" width="44.5" height="21.5" fill="#2a3450"/>
<rect x="26" y="602" width="43.5" height="20.5" fill="#ffffd2"/>
<g shape-rendering="auto">
<text x="34.2" y="616.3" font-size="12" font-weight="bold" textLength="26.9" lengthAdjust="spacingAndGlyphs" stroke="#000" stroke-width=".35">View</text>
</g>
<rect x="241.5" y="596" width="1.5" height="31.5" fill="#141c30"/>
<rect x="95.5" y="601" width="141" height="19.5" fill="#fff"/>
<rect x="95.5" y="601" width="140" height="18.5" fill="#a0a0a0"/>
<rect x="96.5" y="602" width="139" height="17.5" fill="#8a8a8a"/>
<rect x="97.5" y="603" width="138" height="16.5" fill="#ffffe6"/>
<rect x="219.5" y="603" width="16" height="16.5" fill="#8a8a8a"/>
<rect x="219.5" y="603" width="15" height="15.5" fill="#fff"/>
<rect x="220.5" y="604" width="14" height="14.5" fill="#b0b0b0"/>
<rect x="220.5" y="604" width="13" height="13.5" fill="#f0f0f0"/>
<path shape-rendering="auto" d="M223.5 609.25h8l-4 4.3z" fill="#000"/>
<g shape-rendering="auto">
<text x="99.4" y="616.2" font-size="12" textLength="92.1" lengthAdjust="spacingAndGlyphs">None (or Print Test)</text>
</g>
<g shape-rendering="auto">
<text x="250.6" y="616.5" font-size="12" textLength="47.2" lengthAdjust="spacingAndGlyphs">Rendering</text>
</g>
<rect x="308" y="595" width="222" height="32.5" fill="#808080"/>
<rect x="307.5" y="595" width="2" height="32.5" fill="#1a1a1a"/>
<rect x="529" y="595" width="1" height="32.5" fill="#1a1a1a"/>
<rect x="313" y="601" width="141.5" height="20.5" fill="#fff"/>
<rect x="313" y="601" width="140.5" height="19.5" fill="#a0a0a0"/>
<rect x="314" y="602" width="139.5" height="18.5" fill="#8a8a8a"/>
<rect x="315" y="603" width="138.5" height="17.5" fill="#f0f0f0"/>
<rect x="437.5" y="603" width="16" height="17.5" fill="#8a8a8a"/>
<rect x="437.5" y="603" width="15" height="16.5" fill="#fff"/>
<rect x="438.5" y="604" width="14" height="15.5" fill="#b0b0b0"/>
<rect x="438.5" y="604" width="13" height="14.5" fill="#f0f0f0"/>
<path shape-rendering="auto" d="M441.5 609.75h8l-4 4.3z" fill="#000"/>
<g shape-rendering="auto">
<text x="316.4" y="616.2" font-size="12" textLength="40.7" lengthAdjust="spacingAndGlyphs">Absolute</text>
</g>
<rect x="480" y="600.5" width="46.5" height="23.5" fill="#8a8a8a"/>
<rect x="480" y="600.5" width="45.5" height="22.5" fill="#fff"/>
<rect x="481" y="601.5" width="44.5" height="21.5" fill="#b0b0b0"/>
<rect x="481" y="601.5" width="43.5" height="20.5" fill="#f0f0f0"/>
<g shape-rendering="auto">
<text x="488.6" y="616.5" font-size="12" font-weight="bold" textLength="27.4" lengthAdjust="spacingAndGlyphs" stroke="#000" stroke-width=".35">View</text>
</g>
<rect x="7" y="599" width="11" height="26" fill="#dfdfdf"/>
<rect x="533.5" y="599" width="11" height="26" fill="#dfdfdf"/>
<g shape-rendering="auto"><path d="M10.700000000000001 598h3.2v18.3h3l-4.6 7.4l-4.6 -7.4h3z" fill="#4d4d4d" stroke="#c8c8c8" stroke-width="1.2" paint-order="stroke"/></g>
<g shape-rendering="auto"><path d="M537.4 598h3.2v18.3h3l-4.6 7.4l-4.6 -7.4h3z" fill="#4d4d4d" stroke="#c8c8c8" stroke-width="1.2" paint-order="stroke"/></g>
<g shape-rendering="auto">
<text x="8.6" y="640.5" font-size="12.5" font-weight="bold" stroke="#000" stroke-width=".35">2</text>
</g>
<rect x="20.5" y="628" width="252" height="18.5" fill="#fff"/>
<rect x="20.5" y="628" width="251" height="17.5" fill="#a0a0a0"/>
<rect x="21.5" y="629" width="250" height="16.5" fill="#8a8a8a"/>
<rect x="22.5" y="630" width="249" height="15.5" fill="#e4ffe4"/>
<rect x="255.5" y="630" width="16" height="15.5" fill="#8a8a8a"/>
<rect x="255.5" y="630" width="15" height="14.5" fill="#fff"/>
<rect x="256.5" y="631" width="14" height="13.5" fill="#b0b0b0"/>
<rect x="256.5" y="631" width="13" height="12.5" fill="#f0f0f0"/>
<path shape-rendering="auto" d="M259.5 635.75h8l-4 4.3z" fill="#000"/>
<g shape-rendering="auto">
<text x="23.7" y="641.1" font-size="12" textLength="89.4" lengthAdjust="spacingAndGlyphs">XL2546X_fps1.icm</text>
</g>
<rect x="277.5" y="628" width="252" height="18.5" fill="#fff"/>
<rect x="277.5" y="628" width="251" height="17.5" fill="#a0a0a0"/>
<rect x="278.5" y="629" width="250" height="16.5" fill="#8a8a8a"/>
<rect x="279.5" y="630" width="249" height="15.5" fill="#f0f0f0"/>
<rect x="512.5" y="630" width="16" height="15.5" fill="#8a8a8a"/>
<rect x="512.5" y="630" width="15" height="14.5" fill="#fff"/>
<rect x="513.5" y="631" width="14" height="13.5" fill="#b0b0b0"/>
<rect x="513.5" y="631" width="13" height="12.5" fill="#f0f0f0"/>
<path shape-rendering="auto" d="M516.5 635.75h8l-4 4.3z" fill="#000"/>
<g shape-rendering="auto">
<text x="282.3" y="641.8" font-size="12" textLength="43.2" lengthAdjust="spacingAndGlyphs">Browse...</text>
</g>
<g shape-rendering="auto">
<text x="535.3" y="640.8" font-size="12.5" font-weight="bold" stroke="#000" stroke-width=".35">4</text>
</g>
</svg>
</div>
</body></html>
